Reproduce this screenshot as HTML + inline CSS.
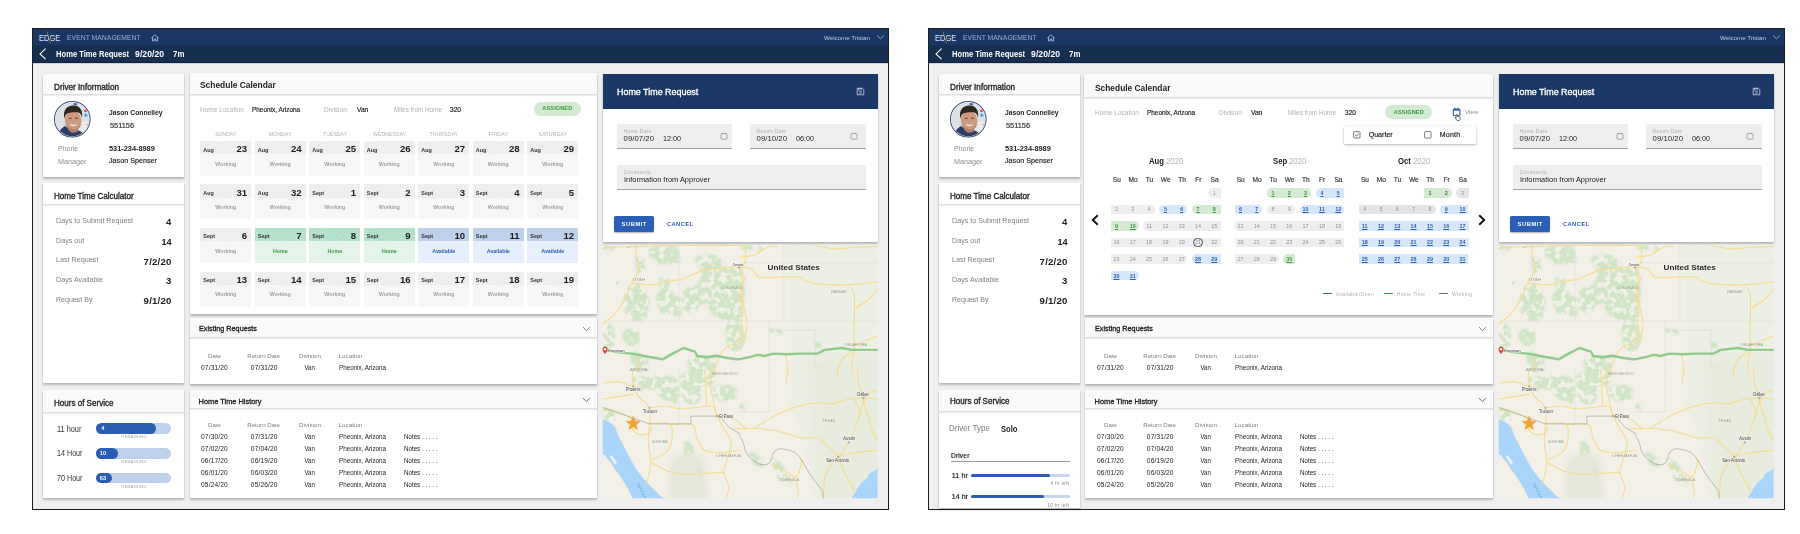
<!DOCTYPE html>
<html lang="en"><head><meta charset="utf-8"><title>Home Time Request</title>
<style>
html,body{margin:0;padding:0;background:#fff;}
body{width:1800px;height:534px;position:relative;overflow:hidden;font-family:"Liberation Sans",sans-serif;}
.scr{position:absolute;top:0;width:900px;height:534px;will-change:transform;}
.t{position:absolute;white-space:nowrap;}
.card{box-shadow:0 1.5px 2px rgba(0,0,0,.24),0 0 1px rgba(0,0,0,.10);}
svg{position:absolute;overflow:visible;}
</style></head><body>
<div class="scr" style="left:0px"><div style="position:absolute;left:32px;top:28px;width:857px;height:482px;box-sizing:border-box;background:#efefef;"></div><div style="position:absolute;left:33.00px;top:29.00px;width:855.00px;height:16.40px;background:#183764;"></div><div style="position:absolute;left:33.00px;top:45.40px;width:855.00px;height:17.60px;background:#162e4f;box-shadow:0 0.5px 1.5px rgba(0,0,0,.3);border-bottom:1px solid #0d2247;box-sizing:border-box;"></div><div class="t" style="left:39.00px;top:32.75px;height:11.96px;line-height:11.96px;font-size:9.2px;color:#e4e9f2;transform:scaleX(0.8131);transform-origin:0 50%;">EDGE</div><svg style="left:44px;top:30px" width="10" height="15"><line x1="3.2" y1="1.6" x2="6.6" y2="13.4" stroke="#c9a548" stroke-width="0.8"/><line x1="3.9" y1="1.6" x2="7.3" y2="13.4" stroke="#183764" stroke-width="0.8"/></svg><div class="t" style="left:67.00px;top:33.41px;height:9.49px;line-height:9.49px;font-size:7.3px;color:#9cb0cd;transform:scaleX(0.9382);transform-origin:0 50%;">EVENT MANAGEMENT</div><svg style="left:150.5px;top:33.5px" width="8" height="8" viewBox="0 0 8 8"><path d="M0.6 3.9 L4 0.9 L7.4 3.9 M1.5 3.3 V7 H3.2 V5 H4.8 V7 H6.5 V3.3" fill="none" stroke="#b9c7dc" stroke-width="0.8" stroke-linejoin="round" stroke-linecap="round"/></svg><div class="t" style="left:824.00px;top:33.63px;height:8.06px;line-height:8.06px;font-size:6.2px;color:#c3cfe0;transform:scaleX(0.9988);transform-origin:0 50%;">Welcome Tristan</div><svg style="left:876px;top:34px" width="9" height="6" viewBox="0 0 9 6"><path d="M1 1.3 L4.5 4.7 L8 1.3" fill="none" stroke="#c3cfe0" stroke-width="0.7"/></svg><svg style="left:38px;top:47px" width="10" height="14" viewBox="0 0 10 14"><path d="M7.6 1.7 L2 6.9 L7.6 12.1" fill="none" stroke="#fff" stroke-width="1.1"/></svg><div class="t" style="left:56.00px;top:49.28px;height:11.18px;line-height:11.18px;font-size:8.6px;color:#fff;font-weight:700;transform:scaleX(0.8846);transform-origin:0 50%;">Home Time Request</div><div class="t" style="left:135.10px;top:49.28px;height:11.18px;line-height:11.18px;font-size:8.6px;color:#fff;font-weight:700;letter-spacing:0.044px;">9/20/20</div><div class="t" style="left:172.60px;top:49.28px;height:11.18px;line-height:11.18px;font-size:8.6px;color:#fff;font-weight:700;transform:scaleX(0.9172);transform-origin:0 50%;">7m</div><div class="card" style="position:absolute;left:43.00px;top:74.00px;width:141.00px;height:103.00px;background:#fff;"></div><div style="position:absolute;left:43.00px;top:74.00px;width:141.00px;height:21.00px;background:#fafafa;border-bottom:1px solid #dedede;box-sizing:border-box;box-shadow:0 1px 1px rgba(0,0,0,.07);"></div><div class="t" style="left:53.60px;top:82.20px;height:10.92px;line-height:10.92px;font-size:8.4px;color:#222;transform:scaleX(0.9767);transform-origin:0 50%;-webkit-text-stroke:0.32px currentColor;">Driver Information</div><svg style="left:54.45px;top:100.85px" width="36.6" height="36.6" viewBox="0 0 36 36">
<defs><clipPath id="avc"><circle cx="18" cy="18" r="16.6"/></clipPath><filter id="avb" x="-10%" y="-10%" width="120%" height="120%"><feGaussianBlur stdDeviation="0.45"/></filter></defs>
<circle cx="18" cy="18" r="17.5" fill="#fff" stroke="#3a4e78" stroke-width="1"/>
<g clip-path="url(#avc)"><g filter="url(#avb)">
<rect x="0" y="0" width="36" height="36" fill="#dde1e5"/>
<rect x="24" y="20" width="12" height="16" fill="#e9eaec"/>
<rect x="19.2" y="1.8" width="3.6" height="2.4" fill="#4a6fb5"/>
<circle cx="31.1" cy="9.6" r="1.5" fill="#e0525c"/><circle cx="31.3" cy="13.9" r="1.6" fill="#4ea3e6"/>
<circle cx="33.2" cy="23.5" r="1.3" fill="#eab9a8"/>
<path d="M3 36 C4 30 6.5 27.5 10.5 24.5 L15 27 L23 28.5 C27 30 30.5 32.5 32 36 Z" fill="#2a3e6a"/>
<path d="M13.6 24.5 L23.6 25.5 L23 30.4 L17.5 31.2 L13.8 28 Z" fill="#b98268"/>
<ellipse cx="18.9" cy="19.6" rx="8.3" ry="9.6" fill="#cf9a80" transform="rotate(-6 18.9 19.6)"/>
<path d="M10.2 17.5 C8.6 9 12.5 4.6 18.6 4.4 C25 4.2 28.6 8.6 27.6 16.4 C26.8 13 25.6 11.4 23.6 11.2 C20 10.9 15.5 11.2 13 12.4 C11.4 13.4 10.8 15.2 10.2 17.5 Z" fill="#2e2623"/>
<path d="M14.6 17.2 L17.4 17 M20.6 16.8 L23.6 17" stroke="#4a342c" stroke-width="0.9"/>
<path d="M15.2 22.9 C17.4 25.4 21 25.4 23 22.7 C20.6 23.5 17.6 23.6 15.2 22.9 Z" fill="#f4ecea"/>
<path d="M12 23 C13.5 27.5 17 29.6 20 29.4 C23.4 29 25.6 26.4 26.6 22.5 C25 26 22.6 27.6 19.6 27.8 C16.6 27.9 13.8 26.2 12 23 Z" fill="#a67560" opacity="0.7"/>
</g></g></svg><div class="t" style="left:108.70px;top:108.23px;height:10.14px;line-height:10.14px;font-size:7.8px;color:#222;font-weight:700;transform:scaleX(0.8631);transform-origin:0 50%;">Jason Connelley</div><div class="t" style="left:109.50px;top:121.33px;height:10.14px;line-height:10.14px;font-size:7.8px;color:#333;transform:scaleX(0.9431);transform-origin:0 50%;-webkit-text-stroke:0.18px currentColor;">551156</div><div class="t" style="left:57.50px;top:144.23px;height:10.14px;line-height:10.14px;font-size:7.8px;color:#8a8a8a;transform:scaleX(0.8956);transform-origin:0 50%;">Phone</div><div class="t" style="left:108.70px;top:144.03px;height:10.14px;line-height:10.14px;font-size:7.8px;color:#222;font-weight:700;transform:scaleX(0.9429);transform-origin:0 50%;">531-234-8989</div><div class="t" style="left:57.50px;top:156.63px;height:10.14px;line-height:10.14px;font-size:7.8px;color:#8a8a8a;transform:scaleX(0.9193);transform-origin:0 50%;">Manager</div><div class="t" style="left:108.70px;top:156.43px;height:10.14px;line-height:10.14px;font-size:7.8px;color:#222;transform:scaleX(0.9225);transform-origin:0 50%;-webkit-text-stroke:0.18px currentColor;">Jason Spenser</div><div class="card" style="position:absolute;left:43.00px;top:183.00px;width:141.00px;height:199.60px;background:#fff;"></div><div style="position:absolute;left:43.00px;top:183.00px;width:141.00px;height:21.60px;background:#fff;border-bottom:1px solid #dedede;box-sizing:border-box;box-shadow:0 1px 1px rgba(0,0,0,.07);"></div><div class="t" style="left:54.00px;top:191.30px;height:10.92px;line-height:10.92px;font-size:8.4px;color:#222;transform:scaleX(0.9628);transform-origin:0 50%;-webkit-text-stroke:0.32px currentColor;">Home Time Calculator</div><div class="t" style="left:55.50px;top:216.14px;height:9.88px;line-height:9.88px;font-size:7.6px;color:#808080;transform:scaleX(0.9396);transform-origin:0 50%;">Days to Submit Request</div><div class="t" style="left:166.06px;top:216.22px;height:12.48px;line-height:12.48px;font-size:9.6px;color:#222;font-weight:700;">4</div><div class="t" style="left:55.50px;top:235.74px;height:9.88px;line-height:9.88px;font-size:7.6px;color:#808080;transform:scaleX(0.9436);transform-origin:0 50%;">Days out</div><div class="t" style="left:160.72px;top:235.82px;height:12.48px;line-height:12.48px;font-size:9.6px;color:#222;font-weight:700;transform:scaleX(0.9552);transform-origin:10.68px 50%;">14</div><div class="t" style="left:55.50px;top:255.44px;height:9.88px;line-height:9.88px;font-size:7.6px;color:#808080;transform:scaleX(0.9490);transform-origin:0 50%;">Last Request</div><div class="t" style="left:143.62px;top:255.52px;height:12.48px;line-height:12.48px;font-size:9.6px;color:#222;font-weight:700;letter-spacing:0.218px;">7/2/20</div><div class="t" style="left:55.50px;top:275.04px;height:9.88px;line-height:9.88px;font-size:7.6px;color:#808080;transform:scaleX(0.9454);transform-origin:0 50%;">Days Available</div><div class="t" style="left:166.06px;top:275.12px;height:12.48px;line-height:12.48px;font-size:9.6px;color:#222;font-weight:700;">3</div><div class="t" style="left:55.50px;top:294.74px;height:9.88px;line-height:9.88px;font-size:7.6px;color:#808080;transform:scaleX(0.9290);transform-origin:0 50%;">Request By</div><div class="t" style="left:143.62px;top:294.82px;height:12.48px;line-height:12.48px;font-size:9.6px;color:#222;font-weight:700;letter-spacing:0.218px;">9/1/20</div><div class="card" style="position:absolute;left:43.00px;top:390.00px;width:141.00px;height:107.70px;background:#fff;"></div><div style="position:absolute;left:43.00px;top:390.00px;width:141.00px;height:22.70px;background:#fafafa;border-bottom:1px solid #dedede;box-sizing:border-box;box-shadow:0 1px 1px rgba(0,0,0,.07);"></div><div class="t" style="left:54.00px;top:398.30px;height:10.92px;line-height:10.92px;font-size:8.4px;color:#222;transform:scaleX(0.9599);transform-origin:0 50%;-webkit-text-stroke:0.32px currentColor;">Hours of Service</div><div class="t" style="left:57.30px;top:423.55px;height:10.79px;line-height:10.79px;font-size:8.3px;color:#333;transform:scaleX(0.8862);transform-origin:0 50%;">11 hour</div><div style="position:absolute;left:95.90px;top:423.20px;width:75.20px;height:10.80px;background:#bfd0ea;border-radius:5.4px;"></div><div style="position:absolute;left:95.90px;top:423.20px;width:60.60px;height:10.80px;background:#2b5eb3;border-radius:5.4px;"></div><div class="t" style="left:101.20px;top:425.46px;height:7.28px;line-height:7.28px;font-size:5.6px;color:#fff;font-weight:700;">4</div><div class="t" style="left:121.60px;top:434.98px;height:4.68px;line-height:4.68px;font-size:3.6px;color:#9a9a9a;letter-spacing:0.511px;">REMAINING</div><div class="t" style="left:57.30px;top:448.45px;height:10.79px;line-height:10.79px;font-size:8.3px;color:#333;transform:scaleX(0.8636);transform-origin:0 50%;">14 Hour</div><div style="position:absolute;left:95.90px;top:448.10px;width:75.20px;height:10.80px;background:#bfd0ea;border-radius:5.4px;"></div><div style="position:absolute;left:95.90px;top:448.10px;width:22.50px;height:10.80px;background:#2b5eb3;border-radius:5.4px;"></div><div class="t" style="left:99.80px;top:450.36px;height:7.28px;line-height:7.28px;font-size:5.6px;color:#fff;font-weight:700;">10</div><div class="t" style="left:121.60px;top:460.38px;height:4.68px;line-height:4.68px;font-size:3.6px;color:#9a9a9a;letter-spacing:0.511px;">REMAINING</div><div class="t" style="left:57.30px;top:472.95px;height:10.79px;line-height:10.79px;font-size:8.3px;color:#333;transform:scaleX(0.8636);transform-origin:0 50%;">70 Hour</div><div style="position:absolute;left:95.90px;top:472.60px;width:75.20px;height:10.80px;background:#bfd0ea;border-radius:5.4px;"></div><div style="position:absolute;left:95.90px;top:472.60px;width:15.70px;height:10.80px;background:#2b5eb3;border-radius:5.4px;"></div><div class="t" style="left:99.80px;top:474.86px;height:7.28px;line-height:7.28px;font-size:5.6px;color:#fff;font-weight:700;">63</div><div class="t" style="left:121.60px;top:484.78px;height:4.68px;line-height:4.68px;font-size:3.6px;color:#9a9a9a;letter-spacing:0.511px;">REMAINING</div><div class="card" style="position:absolute;left:190.00px;top:73.00px;width:407.40px;height:241.00px;background:#fff;"></div><div style="position:absolute;left:190.00px;top:73.00px;width:407.40px;height:22.00px;background:#fafafa;border-bottom:1px solid #dedede;box-sizing:border-box;box-shadow:0 1px 1px rgba(0,0,0,.07);"></div><div class="t" style="left:200.00px;top:79.44px;height:12.22px;line-height:12.22px;font-size:9.4px;color:#1d1d1d;font-weight:700;transform:scaleX(0.8980);transform-origin:0 50%;">Schedule Calendar</div><div class="t" style="left:200.00px;top:105.74px;height:8.97px;line-height:8.97px;font-size:6.9px;color:#b0b0b0;transform:scaleX(0.9481);transform-origin:0 50%;">Home Location</div><div class="t" style="left:252.40px;top:105.74px;height:8.97px;line-height:8.97px;font-size:6.9px;color:#222;transform:scaleX(0.9308);transform-origin:0 50%;-webkit-text-stroke:0.18px currentColor;">Pheonix, Arizona</div><div class="t" style="left:324.00px;top:105.74px;height:8.97px;line-height:8.97px;font-size:6.9px;color:#b0b0b0;transform:scaleX(0.9438);transform-origin:0 50%;">Division</div><div class="t" style="left:356.70px;top:105.74px;height:8.97px;line-height:8.97px;font-size:6.9px;color:#222;transform:scaleX(0.9605);transform-origin:0 50%;-webkit-text-stroke:0.18px currentColor;">Van</div><div class="t" style="left:393.50px;top:105.74px;height:8.97px;line-height:8.97px;font-size:6.9px;color:#b0b0b0;transform:scaleX(0.9206);transform-origin:0 50%;">Miles from Home</div><div class="t" style="left:450.30px;top:105.74px;height:8.97px;line-height:8.97px;font-size:6.9px;color:#222;transform:scaleX(0.9555);transform-origin:0 50%;-webkit-text-stroke:0.18px currentColor;">320</div><div style="position:absolute;left:533.50px;top:102.00px;width:47.50px;height:14.10px;background:#d2e9d2;border-radius:7.1px;"></div><div class="t" style="left:542.35px;top:104.66px;height:7.28px;line-height:7.28px;font-size:5.6px;color:#3b9b3b;font-weight:700;letter-spacing:0.094px;">ASSIGNED</div><div class="t" style="left:215.15px;top:131.09px;height:6.76px;line-height:6.76px;font-size:5.2px;color:#b0b0b0;letter-spacing:0.002px;">SUNDAY</div><div class="t" style="left:268.93px;top:131.09px;height:6.76px;line-height:6.76px;font-size:5.2px;color:#b0b0b0;letter-spacing:0.060px;">MONDAY</div><div class="t" style="left:322.71px;top:131.09px;height:6.76px;line-height:6.76px;font-size:5.2px;color:#b0b0b0;transform:scaleX(0.9969);transform-origin:12.09px 50%;">TUESDAY</div><div class="t" style="left:372.74px;top:131.09px;height:6.76px;line-height:6.76px;font-size:5.2px;color:#b0b0b0;transform:scaleX(0.9961);transform-origin:16.56px 50%;">WEDNESDAY</div><div class="t" style="left:429.57px;top:131.09px;height:6.76px;line-height:6.76px;font-size:5.2px;color:#b0b0b0;letter-spacing:0.035px;">THURSDAY</div><div class="t" style="left:488.62px;top:131.09px;height:6.76px;line-height:6.76px;font-size:5.2px;color:#b0b0b0;letter-spacing:0.136px;">FRIDAY</div><div class="t" style="left:538.61px;top:131.09px;height:6.76px;line-height:6.76px;font-size:5.2px;color:#b0b0b0;letter-spacing:0.120px;">SATURDAY</div><div style="position:absolute;left:200.20px;top:141.00px;width:51.10px;height:35.10px;background:#f7f7f7;"></div><div style="position:absolute;left:200.20px;top:141.00px;width:51.10px;height:13.20px;background:#ebebeb;background-image:repeating-linear-gradient(70deg,rgba(255,255,255,.34) 0,rgba(255,255,255,0) 1.1px,rgba(255,255,255,.34) 2.2px);"></div><div class="t" style="left:203.30px;top:146.58px;height:7.02px;line-height:7.02px;font-size:5.4px;color:#333;font-weight:700;">Aug</div><div class="t" style="left:236.42px;top:143.22px;height:12.48px;line-height:12.48px;font-size:9.6px;color:#1d1d1d;font-weight:700;">23</div><div class="t" style="left:215.25px;top:160.83px;height:6.89px;line-height:6.89px;font-size:5.3px;color:#9e9e9e;font-weight:700;">Working</div><div style="position:absolute;left:254.70px;top:141.00px;width:51.10px;height:35.10px;background:#f7f7f7;"></div><div style="position:absolute;left:254.70px;top:141.00px;width:51.10px;height:13.20px;background:#ebebeb;background-image:repeating-linear-gradient(70deg,rgba(255,255,255,.34) 0,rgba(255,255,255,0) 1.1px,rgba(255,255,255,.34) 2.2px);"></div><div class="t" style="left:257.80px;top:146.58px;height:7.02px;line-height:7.02px;font-size:5.4px;color:#333;font-weight:700;">Aug</div><div class="t" style="left:290.92px;top:143.22px;height:12.48px;line-height:12.48px;font-size:9.6px;color:#1d1d1d;font-weight:700;">24</div><div class="t" style="left:269.75px;top:160.83px;height:6.89px;line-height:6.89px;font-size:5.3px;color:#9e9e9e;font-weight:700;">Working</div><div style="position:absolute;left:309.20px;top:141.00px;width:51.10px;height:35.10px;background:#f7f7f7;"></div><div style="position:absolute;left:309.20px;top:141.00px;width:51.10px;height:13.20px;background:#ebebeb;background-image:repeating-linear-gradient(70deg,rgba(255,255,255,.34) 0,rgba(255,255,255,0) 1.1px,rgba(255,255,255,.34) 2.2px);"></div><div class="t" style="left:312.30px;top:146.58px;height:7.02px;line-height:7.02px;font-size:5.4px;color:#333;font-weight:700;">Aug</div><div class="t" style="left:345.42px;top:143.22px;height:12.48px;line-height:12.48px;font-size:9.6px;color:#1d1d1d;font-weight:700;">25</div><div class="t" style="left:324.25px;top:160.83px;height:6.89px;line-height:6.89px;font-size:5.3px;color:#9e9e9e;font-weight:700;">Working</div><div style="position:absolute;left:363.70px;top:141.00px;width:51.10px;height:35.10px;background:#f7f7f7;"></div><div style="position:absolute;left:363.70px;top:141.00px;width:51.10px;height:13.20px;background:#ebebeb;background-image:repeating-linear-gradient(70deg,rgba(255,255,255,.34) 0,rgba(255,255,255,0) 1.1px,rgba(255,255,255,.34) 2.2px);"></div><div class="t" style="left:366.80px;top:146.58px;height:7.02px;line-height:7.02px;font-size:5.4px;color:#333;font-weight:700;">Aug</div><div class="t" style="left:399.92px;top:143.22px;height:12.48px;line-height:12.48px;font-size:9.6px;color:#1d1d1d;font-weight:700;">26</div><div class="t" style="left:378.75px;top:160.83px;height:6.89px;line-height:6.89px;font-size:5.3px;color:#9e9e9e;font-weight:700;">Working</div><div style="position:absolute;left:418.20px;top:141.00px;width:51.10px;height:35.10px;background:#f7f7f7;"></div><div style="position:absolute;left:418.20px;top:141.00px;width:51.10px;height:13.20px;background:#ebebeb;background-image:repeating-linear-gradient(70deg,rgba(255,255,255,.34) 0,rgba(255,255,255,0) 1.1px,rgba(255,255,255,.34) 2.2px);"></div><div class="t" style="left:421.30px;top:146.58px;height:7.02px;line-height:7.02px;font-size:5.4px;color:#333;font-weight:700;">Aug</div><div class="t" style="left:454.42px;top:143.22px;height:12.48px;line-height:12.48px;font-size:9.6px;color:#1d1d1d;font-weight:700;">27</div><div class="t" style="left:433.25px;top:160.83px;height:6.89px;line-height:6.89px;font-size:5.3px;color:#9e9e9e;font-weight:700;">Working</div><div style="position:absolute;left:472.70px;top:141.00px;width:51.10px;height:35.10px;background:#f7f7f7;"></div><div style="position:absolute;left:472.70px;top:141.00px;width:51.10px;height:13.20px;background:#ebebeb;background-image:repeating-linear-gradient(70deg,rgba(255,255,255,.34) 0,rgba(255,255,255,0) 1.1px,rgba(255,255,255,.34) 2.2px);"></div><div class="t" style="left:475.80px;top:146.58px;height:7.02px;line-height:7.02px;font-size:5.4px;color:#333;font-weight:700;">Aug</div><div class="t" style="left:508.92px;top:143.22px;height:12.48px;line-height:12.48px;font-size:9.6px;color:#1d1d1d;font-weight:700;">28</div><div class="t" style="left:487.75px;top:160.83px;height:6.89px;line-height:6.89px;font-size:5.3px;color:#9e9e9e;font-weight:700;">Working</div><div style="position:absolute;left:527.20px;top:141.00px;width:51.10px;height:35.10px;background:#f7f7f7;"></div><div style="position:absolute;left:527.20px;top:141.00px;width:51.10px;height:13.20px;background:#ebebeb;background-image:repeating-linear-gradient(70deg,rgba(255,255,255,.34) 0,rgba(255,255,255,0) 1.1px,rgba(255,255,255,.34) 2.2px);"></div><div class="t" style="left:530.30px;top:146.58px;height:7.02px;line-height:7.02px;font-size:5.4px;color:#333;font-weight:700;">Aug</div><div class="t" style="left:563.42px;top:143.22px;height:12.48px;line-height:12.48px;font-size:9.6px;color:#1d1d1d;font-weight:700;">29</div><div class="t" style="left:542.25px;top:160.83px;height:6.89px;line-height:6.89px;font-size:5.3px;color:#9e9e9e;font-weight:700;">Working</div><div style="position:absolute;left:200.20px;top:184.40px;width:51.10px;height:35.10px;background:#f7f7f7;"></div><div style="position:absolute;left:200.20px;top:184.40px;width:51.10px;height:13.20px;background:#ebebeb;background-image:repeating-linear-gradient(70deg,rgba(255,255,255,.34) 0,rgba(255,255,255,0) 1.1px,rgba(255,255,255,.34) 2.2px);"></div><div class="t" style="left:203.30px;top:189.98px;height:7.02px;line-height:7.02px;font-size:5.4px;color:#333;font-weight:700;">Aug</div><div class="t" style="left:236.42px;top:186.62px;height:12.48px;line-height:12.48px;font-size:9.6px;color:#1d1d1d;font-weight:700;">31</div><div class="t" style="left:215.25px;top:204.23px;height:6.89px;line-height:6.89px;font-size:5.3px;color:#9e9e9e;font-weight:700;">Working</div><div style="position:absolute;left:254.70px;top:184.40px;width:51.10px;height:35.10px;background:#f7f7f7;"></div><div style="position:absolute;left:254.70px;top:184.40px;width:51.10px;height:13.20px;background:#ebebeb;background-image:repeating-linear-gradient(70deg,rgba(255,255,255,.34) 0,rgba(255,255,255,0) 1.1px,rgba(255,255,255,.34) 2.2px);"></div><div class="t" style="left:257.80px;top:189.98px;height:7.02px;line-height:7.02px;font-size:5.4px;color:#333;font-weight:700;">Aug</div><div class="t" style="left:290.92px;top:186.62px;height:12.48px;line-height:12.48px;font-size:9.6px;color:#1d1d1d;font-weight:700;">32</div><div class="t" style="left:269.75px;top:204.23px;height:6.89px;line-height:6.89px;font-size:5.3px;color:#9e9e9e;font-weight:700;">Working</div><div style="position:absolute;left:309.20px;top:184.40px;width:51.10px;height:35.10px;background:#f7f7f7;"></div><div style="position:absolute;left:309.20px;top:184.40px;width:51.10px;height:13.20px;background:#ebebeb;background-image:repeating-linear-gradient(70deg,rgba(255,255,255,.34) 0,rgba(255,255,255,0) 1.1px,rgba(255,255,255,.34) 2.2px);"></div><div class="t" style="left:312.30px;top:189.98px;height:7.02px;line-height:7.02px;font-size:5.4px;color:#333;font-weight:700;">Sept</div><div class="t" style="left:350.76px;top:186.62px;height:12.48px;line-height:12.48px;font-size:9.6px;color:#1d1d1d;font-weight:700;">1</div><div class="t" style="left:324.25px;top:204.23px;height:6.89px;line-height:6.89px;font-size:5.3px;color:#9e9e9e;font-weight:700;">Working</div><div style="position:absolute;left:363.70px;top:184.40px;width:51.10px;height:35.10px;background:#f7f7f7;"></div><div style="position:absolute;left:363.70px;top:184.40px;width:51.10px;height:13.20px;background:#ebebeb;background-image:repeating-linear-gradient(70deg,rgba(255,255,255,.34) 0,rgba(255,255,255,0) 1.1px,rgba(255,255,255,.34) 2.2px);"></div><div class="t" style="left:366.80px;top:189.98px;height:7.02px;line-height:7.02px;font-size:5.4px;color:#333;font-weight:700;">Sept</div><div class="t" style="left:405.26px;top:186.62px;height:12.48px;line-height:12.48px;font-size:9.6px;color:#1d1d1d;font-weight:700;">2</div><div class="t" style="left:378.75px;top:204.23px;height:6.89px;line-height:6.89px;font-size:5.3px;color:#9e9e9e;font-weight:700;">Working</div><div style="position:absolute;left:418.20px;top:184.40px;width:51.10px;height:35.10px;background:#f7f7f7;"></div><div style="position:absolute;left:418.20px;top:184.40px;width:51.10px;height:13.20px;background:#ebebeb;background-image:repeating-linear-gradient(70deg,rgba(255,255,255,.34) 0,rgba(255,255,255,0) 1.1px,rgba(255,255,255,.34) 2.2px);"></div><div class="t" style="left:421.30px;top:189.98px;height:7.02px;line-height:7.02px;font-size:5.4px;color:#333;font-weight:700;">Sept</div><div class="t" style="left:459.76px;top:186.62px;height:12.48px;line-height:12.48px;font-size:9.6px;color:#1d1d1d;font-weight:700;">3</div><div class="t" style="left:433.25px;top:204.23px;height:6.89px;line-height:6.89px;font-size:5.3px;color:#9e9e9e;font-weight:700;">Working</div><div style="position:absolute;left:472.70px;top:184.40px;width:51.10px;height:35.10px;background:#f7f7f7;"></div><div style="position:absolute;left:472.70px;top:184.40px;width:51.10px;height:13.20px;background:#ebebeb;background-image:repeating-linear-gradient(70deg,rgba(255,255,255,.34) 0,rgba(255,255,255,0) 1.1px,rgba(255,255,255,.34) 2.2px);"></div><div class="t" style="left:475.80px;top:189.98px;height:7.02px;line-height:7.02px;font-size:5.4px;color:#333;font-weight:700;">Sept</div><div class="t" style="left:514.26px;top:186.62px;height:12.48px;line-height:12.48px;font-size:9.6px;color:#1d1d1d;font-weight:700;">4</div><div class="t" style="left:487.75px;top:204.23px;height:6.89px;line-height:6.89px;font-size:5.3px;color:#9e9e9e;font-weight:700;">Working</div><div style="position:absolute;left:527.20px;top:184.40px;width:51.10px;height:35.10px;background:#f7f7f7;"></div><div style="position:absolute;left:527.20px;top:184.40px;width:51.10px;height:13.20px;background:#ebebeb;background-image:repeating-linear-gradient(70deg,rgba(255,255,255,.34) 0,rgba(255,255,255,0) 1.1px,rgba(255,255,255,.34) 2.2px);"></div><div class="t" style="left:530.30px;top:189.98px;height:7.02px;line-height:7.02px;font-size:5.4px;color:#333;font-weight:700;">Sept</div><div class="t" style="left:568.76px;top:186.62px;height:12.48px;line-height:12.48px;font-size:9.6px;color:#1d1d1d;font-weight:700;">5</div><div class="t" style="left:542.25px;top:204.23px;height:6.89px;line-height:6.89px;font-size:5.3px;color:#9e9e9e;font-weight:700;">Working</div><div style="position:absolute;left:200.20px;top:227.90px;width:51.10px;height:35.10px;background:#f7f7f7;"></div><div style="position:absolute;left:200.20px;top:227.90px;width:51.10px;height:13.20px;background:#ebebeb;background-image:repeating-linear-gradient(70deg,rgba(255,255,255,.34) 0,rgba(255,255,255,0) 1.1px,rgba(255,255,255,.34) 2.2px);"></div><div class="t" style="left:203.30px;top:233.48px;height:7.02px;line-height:7.02px;font-size:5.4px;color:#333;font-weight:700;">Sept</div><div class="t" style="left:241.76px;top:230.12px;height:12.48px;line-height:12.48px;font-size:9.6px;color:#1d1d1d;font-weight:700;">6</div><div class="t" style="left:215.25px;top:247.73px;height:6.89px;line-height:6.89px;font-size:5.3px;color:#9e9e9e;font-weight:700;">Working</div><div style="position:absolute;left:254.70px;top:227.90px;width:51.10px;height:35.10px;background:#e4f4eb;"></div><div style="position:absolute;left:254.70px;top:227.90px;width:51.10px;height:13.20px;background:#a6dbc1;background-image:repeating-linear-gradient(70deg,rgba(255,255,255,.34) 0,rgba(255,255,255,0) 1.1px,rgba(255,255,255,.34) 2.2px);"></div><div class="t" style="left:257.80px;top:233.48px;height:7.02px;line-height:7.02px;font-size:5.4px;color:#333;font-weight:700;">Sept</div><div class="t" style="left:296.26px;top:230.12px;height:12.48px;line-height:12.48px;font-size:9.6px;color:#1d1d1d;font-weight:700;">7</div><div class="t" style="left:272.94px;top:247.73px;height:6.89px;line-height:6.89px;font-size:5.3px;color:#349b38;font-weight:700;">Home</div><div style="position:absolute;left:309.20px;top:227.90px;width:51.10px;height:35.10px;background:#e4f4eb;"></div><div style="position:absolute;left:309.20px;top:227.90px;width:51.10px;height:13.20px;background:#a6dbc1;background-image:repeating-linear-gradient(70deg,rgba(255,255,255,.34) 0,rgba(255,255,255,0) 1.1px,rgba(255,255,255,.34) 2.2px);"></div><div class="t" style="left:312.30px;top:233.48px;height:7.02px;line-height:7.02px;font-size:5.4px;color:#333;font-weight:700;">Sept</div><div class="t" style="left:350.76px;top:230.12px;height:12.48px;line-height:12.48px;font-size:9.6px;color:#1d1d1d;font-weight:700;">8</div><div class="t" style="left:327.44px;top:247.73px;height:6.89px;line-height:6.89px;font-size:5.3px;color:#349b38;font-weight:700;">Home</div><div style="position:absolute;left:363.70px;top:227.90px;width:51.10px;height:35.10px;background:#e4f4eb;"></div><div style="position:absolute;left:363.70px;top:227.90px;width:51.10px;height:13.20px;background:#a6dbc1;background-image:repeating-linear-gradient(70deg,rgba(255,255,255,.34) 0,rgba(255,255,255,0) 1.1px,rgba(255,255,255,.34) 2.2px);"></div><div class="t" style="left:366.80px;top:233.48px;height:7.02px;line-height:7.02px;font-size:5.4px;color:#333;font-weight:700;">Sept</div><div class="t" style="left:405.26px;top:230.12px;height:12.48px;line-height:12.48px;font-size:9.6px;color:#1d1d1d;font-weight:700;">9</div><div class="t" style="left:381.94px;top:247.73px;height:6.89px;line-height:6.89px;font-size:5.3px;color:#349b38;font-weight:700;">Home</div><div style="position:absolute;left:418.20px;top:227.90px;width:51.10px;height:35.10px;background:#e6f0fd;"></div><div style="position:absolute;left:418.20px;top:227.90px;width:51.10px;height:13.20px;background:#bdd0ec;"></div><div class="t" style="left:421.30px;top:233.48px;height:7.02px;line-height:7.02px;font-size:5.4px;color:#333;font-weight:700;">Sept</div><div class="t" style="left:454.42px;top:230.12px;height:12.48px;line-height:12.48px;font-size:9.6px;color:#1d1d1d;font-weight:700;">10</div><div class="t" style="left:432.26px;top:247.73px;height:6.89px;line-height:6.89px;font-size:5.3px;color:#2b5eb3;font-weight:700;">Available</div><div style="position:absolute;left:472.70px;top:227.90px;width:51.10px;height:35.10px;background:#e6f0fd;"></div><div style="position:absolute;left:472.70px;top:227.90px;width:51.10px;height:13.20px;background:#bdd0ec;"></div><div class="t" style="left:475.80px;top:233.48px;height:7.02px;line-height:7.02px;font-size:5.4px;color:#333;font-weight:700;">Sept</div><div class="t" style="left:509.45px;top:230.12px;height:12.48px;line-height:12.48px;font-size:9.6px;color:#1d1d1d;font-weight:700;">11</div><div class="t" style="left:486.76px;top:247.73px;height:6.89px;line-height:6.89px;font-size:5.3px;color:#2b5eb3;font-weight:700;">Available</div><div style="position:absolute;left:527.20px;top:227.90px;width:51.10px;height:35.10px;background:#e6f0fd;"></div><div style="position:absolute;left:527.20px;top:227.90px;width:51.10px;height:13.20px;background:#bdd0ec;"></div><div class="t" style="left:530.30px;top:233.48px;height:7.02px;line-height:7.02px;font-size:5.4px;color:#333;font-weight:700;">Sept</div><div class="t" style="left:563.42px;top:230.12px;height:12.48px;line-height:12.48px;font-size:9.6px;color:#1d1d1d;font-weight:700;">12</div><div class="t" style="left:541.26px;top:247.73px;height:6.89px;line-height:6.89px;font-size:5.3px;color:#2b5eb3;font-weight:700;">Available</div><div style="position:absolute;left:200.20px;top:271.50px;width:51.10px;height:35.10px;background:#f7f7f7;"></div><div style="position:absolute;left:200.20px;top:271.50px;width:51.10px;height:13.20px;background:#ebebeb;background-image:repeating-linear-gradient(70deg,rgba(255,255,255,.34) 0,rgba(255,255,255,0) 1.1px,rgba(255,255,255,.34) 2.2px);"></div><div class="t" style="left:203.30px;top:277.08px;height:7.02px;line-height:7.02px;font-size:5.4px;color:#333;font-weight:700;">Sept</div><div class="t" style="left:236.42px;top:273.72px;height:12.48px;line-height:12.48px;font-size:9.6px;color:#1d1d1d;font-weight:700;">13</div><div class="t" style="left:215.25px;top:291.33px;height:6.89px;line-height:6.89px;font-size:5.3px;color:#9e9e9e;font-weight:700;">Working</div><div style="position:absolute;left:254.70px;top:271.50px;width:51.10px;height:35.10px;background:#f7f7f7;"></div><div style="position:absolute;left:254.70px;top:271.50px;width:51.10px;height:13.20px;background:#ebebeb;background-image:repeating-linear-gradient(70deg,rgba(255,255,255,.34) 0,rgba(255,255,255,0) 1.1px,rgba(255,255,255,.34) 2.2px);"></div><div class="t" style="left:257.80px;top:277.08px;height:7.02px;line-height:7.02px;font-size:5.4px;color:#333;font-weight:700;">Sept</div><div class="t" style="left:290.92px;top:273.72px;height:12.48px;line-height:12.48px;font-size:9.6px;color:#1d1d1d;font-weight:700;">14</div><div class="t" style="left:269.75px;top:291.33px;height:6.89px;line-height:6.89px;font-size:5.3px;color:#9e9e9e;font-weight:700;">Working</div><div style="position:absolute;left:309.20px;top:271.50px;width:51.10px;height:35.10px;background:#f7f7f7;"></div><div style="position:absolute;left:309.20px;top:271.50px;width:51.10px;height:13.20px;background:#ebebeb;background-image:repeating-linear-gradient(70deg,rgba(255,255,255,.34) 0,rgba(255,255,255,0) 1.1px,rgba(255,255,255,.34) 2.2px);"></div><div class="t" style="left:312.30px;top:277.08px;height:7.02px;line-height:7.02px;font-size:5.4px;color:#333;font-weight:700;">Sept</div><div class="t" style="left:345.42px;top:273.72px;height:12.48px;line-height:12.48px;font-size:9.6px;color:#1d1d1d;font-weight:700;">15</div><div class="t" style="left:324.25px;top:291.33px;height:6.89px;line-height:6.89px;font-size:5.3px;color:#9e9e9e;font-weight:700;">Working</div><div style="position:absolute;left:363.70px;top:271.50px;width:51.10px;height:35.10px;background:#f7f7f7;"></div><div style="position:absolute;left:363.70px;top:271.50px;width:51.10px;height:13.20px;background:#ebebeb;background-image:repeating-linear-gradient(70deg,rgba(255,255,255,.34) 0,rgba(255,255,255,0) 1.1px,rgba(255,255,255,.34) 2.2px);"></div><div class="t" style="left:366.80px;top:277.08px;height:7.02px;line-height:7.02px;font-size:5.4px;color:#333;font-weight:700;">Sept</div><div class="t" style="left:399.92px;top:273.72px;height:12.48px;line-height:12.48px;font-size:9.6px;color:#1d1d1d;font-weight:700;">16</div><div class="t" style="left:378.75px;top:291.33px;height:6.89px;line-height:6.89px;font-size:5.3px;color:#9e9e9e;font-weight:700;">Working</div><div style="position:absolute;left:418.20px;top:271.50px;width:51.10px;height:35.10px;background:#f7f7f7;"></div><div style="position:absolute;left:418.20px;top:271.50px;width:51.10px;height:13.20px;background:#ebebeb;background-image:repeating-linear-gradient(70deg,rgba(255,255,255,.34) 0,rgba(255,255,255,0) 1.1px,rgba(255,255,255,.34) 2.2px);"></div><div class="t" style="left:421.30px;top:277.08px;height:7.02px;line-height:7.02px;font-size:5.4px;color:#333;font-weight:700;">Sept</div><div class="t" style="left:454.42px;top:273.72px;height:12.48px;line-height:12.48px;font-size:9.6px;color:#1d1d1d;font-weight:700;">17</div><div class="t" style="left:433.25px;top:291.33px;height:6.89px;line-height:6.89px;font-size:5.3px;color:#9e9e9e;font-weight:700;">Working</div><div style="position:absolute;left:472.70px;top:271.50px;width:51.10px;height:35.10px;background:#f7f7f7;"></div><div style="position:absolute;left:472.70px;top:271.50px;width:51.10px;height:13.20px;background:#ebebeb;background-image:repeating-linear-gradient(70deg,rgba(255,255,255,.34) 0,rgba(255,255,255,0) 1.1px,rgba(255,255,255,.34) 2.2px);"></div><div class="t" style="left:475.80px;top:277.08px;height:7.02px;line-height:7.02px;font-size:5.4px;color:#333;font-weight:700;">Sept</div><div class="t" style="left:508.92px;top:273.72px;height:12.48px;line-height:12.48px;font-size:9.6px;color:#1d1d1d;font-weight:700;">18</div><div class="t" style="left:487.75px;top:291.33px;height:6.89px;line-height:6.89px;font-size:5.3px;color:#9e9e9e;font-weight:700;">Working</div><div style="position:absolute;left:527.20px;top:271.50px;width:51.10px;height:35.10px;background:#f7f7f7;"></div><div style="position:absolute;left:527.20px;top:271.50px;width:51.10px;height:13.20px;background:#ebebeb;background-image:repeating-linear-gradient(70deg,rgba(255,255,255,.34) 0,rgba(255,255,255,0) 1.1px,rgba(255,255,255,.34) 2.2px);"></div><div class="t" style="left:530.30px;top:277.08px;height:7.02px;line-height:7.02px;font-size:5.4px;color:#333;font-weight:700;">Sept</div><div class="t" style="left:563.42px;top:273.72px;height:12.48px;line-height:12.48px;font-size:9.6px;color:#1d1d1d;font-weight:700;">19</div><div class="t" style="left:542.25px;top:291.33px;height:6.89px;line-height:6.89px;font-size:5.3px;color:#9e9e9e;font-weight:700;">Working</div><div class="card" style="position:absolute;left:189.70px;top:318.00px;width:407.70px;height:66.30px;background:#fff;"></div><div style="position:absolute;left:189.70px;top:318.00px;width:407.70px;height:19.50px;background:#fafafa;border-bottom:1px solid #dedede;box-sizing:border-box;box-shadow:0 1px 1px rgba(0,0,0,.07);"></div><div class="t" style="left:198.70px;top:324.16px;height:9.62px;line-height:9.62px;font-size:7.4px;color:#222;transform:scaleX(0.9792);transform-origin:0 50%;-webkit-text-stroke:0.32px currentColor;">Existing Requests</div><svg style="left:581.90px;top:326.00px" width="9" height="6" viewBox="0 0 9 6"><path d="M1 1.2 L4.5 4.6 L8 1.2" fill="none" stroke="#707070" stroke-width="0.95"/></svg><div class="t" style="left:207.85px;top:352.33px;height:8.06px;line-height:8.06px;font-size:6.2px;color:#808080;transform:scaleX(0.9926);transform-origin:6.55px 50%;">Date</div><div class="t" style="left:247.49px;top:352.33px;height:8.06px;line-height:8.06px;font-size:6.2px;color:#808080;transform:scaleX(0.9872);transform-origin:16.71px 50%;">Return Date</div><div class="t" style="left:298.89px;top:352.33px;height:8.06px;line-height:8.06px;font-size:6.2px;color:#808080;letter-spacing:0.074px;">Division</div><div class="t" style="left:338.60px;top:352.33px;height:8.06px;line-height:8.06px;font-size:6.2px;color:#808080;letter-spacing:0.070px;">Location</div><div class="t" style="left:201.07px;top:364.10px;height:8.58px;line-height:8.58px;font-size:6.6px;color:#222;letter-spacing:0.139px;">07/31/20</div><div class="t" style="left:250.87px;top:364.10px;height:8.58px;line-height:8.58px;font-size:6.6px;color:#222;letter-spacing:0.139px;">07/31/20</div><div class="t" style="left:304.37px;top:364.10px;height:8.58px;line-height:8.58px;font-size:6.6px;color:#222;transform:scaleX(0.9153);transform-origin:5.63px 50%;">Van</div><div class="t" style="left:338.60px;top:364.10px;height:8.58px;line-height:8.58px;font-size:6.6px;color:#222;transform:scaleX(0.9489);transform-origin:0 50%;">Pheonix, Arizona</div><div class="card" style="position:absolute;left:189.70px;top:390.20px;width:407.70px;height:107.70px;background:#fff;"></div><div style="position:absolute;left:189.70px;top:390.20px;width:407.70px;height:18.90px;background:#fafafa;border-bottom:1px solid #dedede;box-sizing:border-box;box-shadow:0 1px 1px rgba(0,0,0,.07);"></div><div class="t" style="left:198.60px;top:397.26px;height:9.62px;line-height:9.62px;font-size:7.4px;color:#222;letter-spacing:0.005px;-webkit-text-stroke:0.32px currentColor;">Home Time History</div><svg style="left:581.90px;top:397.40px" width="9" height="6" viewBox="0 0 9 6"><path d="M1 1.2 L4.5 4.6 L8 1.2" fill="none" stroke="#707070" stroke-width="0.95"/></svg><div class="t" style="left:207.85px;top:420.83px;height:8.06px;line-height:8.06px;font-size:6.2px;color:#808080;transform:scaleX(0.9926);transform-origin:6.55px 50%;">Date</div><div class="t" style="left:247.49px;top:420.83px;height:8.06px;line-height:8.06px;font-size:6.2px;color:#808080;transform:scaleX(0.9872);transform-origin:16.71px 50%;">Return Date</div><div class="t" style="left:298.89px;top:420.83px;height:8.06px;line-height:8.06px;font-size:6.2px;color:#808080;letter-spacing:0.074px;">Division</div><div class="t" style="left:338.60px;top:420.83px;height:8.06px;line-height:8.06px;font-size:6.2px;color:#808080;letter-spacing:0.070px;">Location</div><div class="t" style="left:201.07px;top:432.80px;height:8.58px;line-height:8.58px;font-size:6.6px;color:#222;letter-spacing:0.139px;">07/30/20</div><div class="t" style="left:250.87px;top:432.80px;height:8.58px;line-height:8.58px;font-size:6.6px;color:#222;letter-spacing:0.139px;">07/31/20</div><div class="t" style="left:304.37px;top:432.80px;height:8.58px;line-height:8.58px;font-size:6.6px;color:#222;transform:scaleX(0.9153);transform-origin:5.63px 50%;">Van</div><div class="t" style="left:338.60px;top:432.80px;height:8.58px;line-height:8.58px;font-size:6.6px;color:#222;transform:scaleX(0.9489);transform-origin:0 50%;">Pheonix, Arizona</div><div class="t" style="left:404.00px;top:432.80px;height:8.58px;line-height:8.58px;font-size:6.6px;color:#222;transform:scaleX(0.9416);transform-origin:0 50%;">Notes . . . . .</div><div class="t" style="left:201.07px;top:444.90px;height:8.58px;line-height:8.58px;font-size:6.6px;color:#222;letter-spacing:0.139px;">07/02/20</div><div class="t" style="left:250.87px;top:444.90px;height:8.58px;line-height:8.58px;font-size:6.6px;color:#222;letter-spacing:0.139px;">07/04/20</div><div class="t" style="left:304.37px;top:444.90px;height:8.58px;line-height:8.58px;font-size:6.6px;color:#222;transform:scaleX(0.9153);transform-origin:5.63px 50%;">Van</div><div class="t" style="left:338.60px;top:444.90px;height:8.58px;line-height:8.58px;font-size:6.6px;color:#222;transform:scaleX(0.9489);transform-origin:0 50%;">Pheonix, Arizona</div><div class="t" style="left:404.00px;top:444.90px;height:8.58px;line-height:8.58px;font-size:6.6px;color:#222;transform:scaleX(0.9416);transform-origin:0 50%;">Notes . . . . .</div><div class="t" style="left:201.07px;top:457.00px;height:8.58px;line-height:8.58px;font-size:6.6px;color:#222;letter-spacing:0.139px;">06/17/20</div><div class="t" style="left:250.87px;top:457.00px;height:8.58px;line-height:8.58px;font-size:6.6px;color:#222;letter-spacing:0.139px;">06/19/20</div><div class="t" style="left:304.37px;top:457.00px;height:8.58px;line-height:8.58px;font-size:6.6px;color:#222;transform:scaleX(0.9153);transform-origin:5.63px 50%;">Van</div><div class="t" style="left:338.60px;top:457.00px;height:8.58px;line-height:8.58px;font-size:6.6px;color:#222;transform:scaleX(0.9489);transform-origin:0 50%;">Pheonix, Arizona</div><div class="t" style="left:404.00px;top:457.00px;height:8.58px;line-height:8.58px;font-size:6.6px;color:#222;transform:scaleX(0.9416);transform-origin:0 50%;">Notes . . . . .</div><div class="t" style="left:201.07px;top:469.10px;height:8.58px;line-height:8.58px;font-size:6.6px;color:#222;letter-spacing:0.139px;">06/01/20</div><div class="t" style="left:250.87px;top:469.10px;height:8.58px;line-height:8.58px;font-size:6.6px;color:#222;letter-spacing:0.139px;">06/03/20</div><div class="t" style="left:304.37px;top:469.10px;height:8.58px;line-height:8.58px;font-size:6.6px;color:#222;transform:scaleX(0.9153);transform-origin:5.63px 50%;">Van</div><div class="t" style="left:338.60px;top:469.10px;height:8.58px;line-height:8.58px;font-size:6.6px;color:#222;transform:scaleX(0.9489);transform-origin:0 50%;">Pheonix, Arizona</div><div class="t" style="left:404.00px;top:469.10px;height:8.58px;line-height:8.58px;font-size:6.6px;color:#222;transform:scaleX(0.9416);transform-origin:0 50%;">Notes . . . . .</div><div class="t" style="left:201.07px;top:481.20px;height:8.58px;line-height:8.58px;font-size:6.6px;color:#222;letter-spacing:0.139px;">05/24/20</div><div class="t" style="left:250.87px;top:481.20px;height:8.58px;line-height:8.58px;font-size:6.6px;color:#222;letter-spacing:0.139px;">05/26/20</div><div class="t" style="left:304.37px;top:481.20px;height:8.58px;line-height:8.58px;font-size:6.6px;color:#222;transform:scaleX(0.9153);transform-origin:5.63px 50%;">Van</div><div class="t" style="left:338.60px;top:481.20px;height:8.58px;line-height:8.58px;font-size:6.6px;color:#222;transform:scaleX(0.9489);transform-origin:0 50%;">Pheonix, Arizona</div><div class="t" style="left:404.00px;top:481.20px;height:8.58px;line-height:8.58px;font-size:6.6px;color:#222;transform:scaleX(0.9416);transform-origin:0 50%;">Notes . . . . .</div><div class="card" style="position:absolute;left:603.00px;top:73.70px;width:274.50px;height:168.00px;background:#fff;"></div><div style="position:absolute;left:603.00px;top:73.70px;width:274.50px;height:35.30px;background:#1a3864;"></div><div class="t" style="left:616.70px;top:86.55px;height:11.96px;line-height:11.96px;font-size:9.2px;color:#fff;transform:scaleX(0.9707);transform-origin:0 50%;-webkit-text-stroke:0.32px currentColor;">Home Time Request</div><svg style="left:856.4px;top:87.2px" width="9" height="9" viewBox="0 0 9 9"><path d="M1.2 1.2 H6.3 L7.8 2.7 V7.8 H1.2 Z" fill="none" stroke="#dfe6f0" stroke-width="0.7"/><rect x="2.7" y="1.4" width="3" height="1.6" fill="none" stroke="#dfe6f0" stroke-width="0.5"/><circle cx="4.5" cy="5.4" r="1.1" fill="none" stroke="#dfe6f0" stroke-width="0.6"/></svg><div style="position:absolute;left:616.70px;top:123.90px;width:115.30px;height:25.10px;background:#eeeeee;border-bottom:1px solid #a2a2a2;box-sizing:border-box;border-radius:1.5px 1.5px 0 0;"></div><div style="position:absolute;left:749.70px;top:123.90px;width:116.00px;height:25.10px;background:#eeeeee;border-bottom:1px solid #a2a2a2;box-sizing:border-box;border-radius:1.5px 1.5px 0 0;"></div><div style="position:absolute;left:616.70px;top:165.40px;width:249.00px;height:24.40px;background:#eeeeee;border-bottom:1px solid #a2a2a2;box-sizing:border-box;border-radius:1.5px 1.5px 0 0;"></div><div class="t" style="left:623.60px;top:127.90px;height:6.5px;line-height:6.5px;font-size:5px;color:#ababab;letter-spacing:0.301px;">Home Date</div><div class="t" style="left:623.60px;top:133.89px;height:10.01px;line-height:10.01px;font-size:7.7px;color:#222;letter-spacing:0.066px;">09/07/20</div><div class="t" style="left:663.40px;top:133.89px;height:10.01px;line-height:10.01px;font-size:7.7px;color:#222;transform:scaleX(0.9341);transform-origin:0 50%;">12:00</div><svg style="left:720.00px;top:132.40px" width="8" height="8" viewBox="0 0 8 8"><rect x="1" y="1.6" width="6" height="5.6" rx="0.8" fill="none" stroke="#8a8a8a" stroke-width="0.7"/><path d="M2.5 0.6 V2 M5.5 0.6 V2" stroke="#8a8a8a" stroke-width="0.7"/></svg><div class="t" style="left:756.60px;top:127.90px;height:6.5px;line-height:6.5px;font-size:5px;color:#ababab;letter-spacing:0.258px;">Return Date</div><div class="t" style="left:756.60px;top:133.89px;height:10.01px;line-height:10.01px;font-size:7.7px;color:#222;letter-spacing:0.066px;">09/10/20</div><div class="t" style="left:796.10px;top:133.89px;height:10.01px;line-height:10.01px;font-size:7.7px;color:#222;transform:scaleX(0.9341);transform-origin:0 50%;">06:00</div><svg style="left:850.30px;top:132.40px" width="8" height="8" viewBox="0 0 8 8"><rect x="1" y="1.6" width="6" height="5.6" rx="0.8" fill="none" stroke="#8a8a8a" stroke-width="0.7"/><path d="M2.5 0.6 V2 M5.5 0.6 V2" stroke="#8a8a8a" stroke-width="0.7"/></svg><div class="t" style="left:623.60px;top:169.00px;height:6.5px;line-height:6.5px;font-size:5px;color:#ababab;letter-spacing:0.403px;">Comments</div><div class="t" style="left:623.60px;top:175.04px;height:9.88px;line-height:9.88px;font-size:7.6px;color:#222;transform:scaleX(0.9811);transform-origin:0 50%;">Information from Approver</div><div style="position:absolute;left:613.90px;top:216.00px;width:40.10px;height:16.00px;background:#2c5fb4;border-radius:1.5px;box-shadow:0 1px 1.5px rgba(0,0,0,.3);"></div><div class="t" style="left:621.61px;top:220.75px;height:7.54px;line-height:7.54px;font-size:5.8px;color:#fff;font-weight:700;letter-spacing:0.511px;">SUBMIT</div><div class="t" style="left:666.90px;top:220.75px;height:7.54px;line-height:7.54px;font-size:5.8px;color:#2c5fb4;font-weight:700;letter-spacing:0.422px;">CANCEL</div><svg style="left:603.4px;top:245.2px" width="274.6" height="253.3" viewBox="0.4 0.2 274.6 253.3"><defs><clipPath id="mcA"><rect width="275" height="253.5"/></clipPath><filter id="blA" x="0" y="0" width="275" height="253.5" filterUnits="userSpaceOnUse"><feGaussianBlur in="SourceGraphic" stdDeviation="1.3" result="b"/><feTurbulence type="fractalNoise" baseFrequency="0.16" numOctaves="2" seed="7" result="n"/><feColorMatrix in="n" type="matrix" values="0 0 0 0 0  0 0 0 0 0  0 0 0 0 0  7 0 0 0 -2.6" result="m"/><feGaussianBlur in="m" stdDeviation="0.5" result="m2"/><feComposite in="b" in2="m2" operator="in"/></filter><filter id="bsA" x="-20%" y="-20%" width="140%" height="140%"><feGaussianBlur stdDeviation="4"/></filter></defs><g clip-path="url(#mcA)"><rect width="275" height="253.5" fill="#f3f0e8"/><g filter="url(#bsA)"><path d="M180 -10 L290 -10 L290 270 L215 270 L200 200 L185 150 L190 90 Z" fill="#ecefe3"/><path d="M205 110 L290 110 L290 270 L215 270 Z" fill="#e8ecde"/><path d="M70 215 L100 210 L105 262 L68 262 Z" fill="#e2e6d6"/></g><g filter="url(#blA)" fill="#c9e3bf" opacity="0.85"><path d="M92.0 12.6 C94.0 9.8 106.2 9.0 111.4 10.2 C116.7 11.4 119.4 17.9 123.6 19.9 C127.9 21.9 133.8 19.5 137.0 22.3 C140.3 25.2 142.5 31.3 143.1 37.0 C143.7 42.6 141.7 49.5 140.7 56.4 C139.6 63.3 139.8 75.1 137.0 78.4 C134.2 81.6 127.9 77.1 123.6 75.9 C119.4 74.7 115.1 73.9 111.4 71.0 C107.8 68.2 105.4 59.3 101.7 58.9 C98.0 58.5 93.2 68.2 89.5 68.6 C85.9 69.0 81.0 65.4 79.8 61.3 C78.6 57.2 79.8 47.9 82.2 44.3 C84.7 40.6 91.6 42.2 94.4 39.4 C97.2 36.6 99.7 31.7 99.3 27.2 C98.9 22.8 89.9 15.4 92.0 12.6 Z"/><path d="M123.6 78.4 C125.6 74.7 133.8 75.5 137.0 78.4 C140.3 81.2 143.7 90.5 143.1 95.4 C142.5 100.3 136.4 106.8 133.4 107.6 C130.3 108.4 126.5 105.1 124.8 100.3 C123.2 95.4 121.6 82.0 123.6 78.4 Z"/><path d="M33.5 12.6 C34.7 10.4 40.8 12.2 42.0 15.0 C43.3 17.9 42.0 27.4 40.8 29.7 C39.6 31.9 36.0 31.3 34.7 28.4 C33.5 25.6 32.3 14.8 33.5 12.6 Z"/><path d="M23.8 44.3 C26.6 40.2 34.5 37.8 38.4 39.4 C42.2 41.0 46.1 48.3 46.9 54.0 C47.7 59.7 45.9 69.8 43.3 73.5 C40.6 77.1 34.7 77.5 31.1 75.9 C27.4 74.3 22.6 69.0 21.3 63.7 C20.1 58.5 20.9 48.3 23.8 44.3 Z"/><path d="M54.2 47.9 C56.2 44.5 67.6 43.7 70.0 46.7 C72.5 49.7 70.9 62.7 68.8 66.2 C66.8 69.6 60.3 70.4 57.9 67.4 C55.4 64.4 52.2 51.4 54.2 47.9 Z"/><path d="M56.7 34.5 C58.1 32.7 65.0 32.5 66.4 34.5 C67.8 36.6 66.6 44.9 65.2 46.7 C63.8 48.5 59.3 47.5 57.9 45.5 C56.5 43.5 55.2 36.3 56.7 34.5 Z"/><path d="M70.0 54.0 C71.1 51.0 75.9 49.9 77.4 52.8 C78.8 55.6 79.6 68.0 78.6 71.0 C77.6 74.1 72.7 73.9 71.3 71.0 C69.8 68.2 69.0 57.0 70.0 54.0 Z"/><path d="M0.7 80.8 C2.1 77.3 8.6 78.8 10.4 82.0 C12.2 85.2 13.0 96.8 11.6 100.3 C10.2 103.7 3.7 105.9 1.9 102.7 C0.0 99.5 -0.8 84.2 0.7 80.8 Z"/><path d="M21.3 85.7 C23.6 83.6 33.7 84.4 36.0 86.9 C38.2 89.3 37.0 98.2 34.7 100.3 C32.5 102.3 24.8 101.5 22.6 99.0 C20.3 96.6 19.1 87.7 21.3 85.7 Z"/><path d="M28.7 107.6 C30.9 105.5 41.6 109.4 44.5 112.4 C47.3 115.5 47.9 123.8 45.7 125.8 C43.5 127.9 33.9 127.7 31.1 124.6 C28.2 121.6 26.4 109.6 28.7 107.6 Z"/><path d="M87.1 113.7 C90.9 111.2 107.6 110.2 111.4 112.4 C115.3 114.7 114.1 124.6 110.2 127.0 C106.4 129.5 92.2 129.3 88.3 127.0 C84.5 124.8 83.2 116.1 87.1 113.7 Z"/><path d="M0.7 0.9 C2.5 0.2 9.8 0.2 11.6 0.9 C13.4 1.7 13.4 4.6 11.6 5.3 C9.8 6.0 2.5 6.0 0.7 5.3 C-1.2 4.6 -1.2 1.7 0.7 0.9 Z"/><path d="M48.1 2.9 C52.4 0.8 70.2 -0.1 74.9 2.4 C79.6 4.8 78.6 14.6 76.1 17.5 C73.7 20.4 64.8 20.3 60.3 19.9 C55.8 19.5 51.4 17.9 49.3 15.0 C47.3 12.2 43.9 5.0 48.1 2.9 Z"/><path d="M31.1 132.3 C33.7 130.7 46.5 131.5 49.3 133.5 C52.2 135.6 50.8 142.9 48.1 144.5 C45.5 146.1 36.4 145.3 33.5 143.3 C30.7 141.2 28.5 133.9 31.1 132.3 Z"/><path d="M54.2 131.1 C58.5 130.3 71.5 130.3 74.9 134.7 C78.4 139.2 77.4 154.6 74.9 157.9 C72.5 161.1 64.6 157.3 60.3 154.2 C56.0 151.2 50.4 143.5 49.3 139.6 C48.3 135.8 50.0 131.9 54.2 131.1 Z"/><path d="M78.6 129.9 C81.0 125.8 92.6 126.6 95.6 131.1 C98.7 135.6 99.3 152.6 96.8 156.7 C94.4 160.7 84.0 159.9 81.0 155.4 C78.0 151.0 76.1 133.9 78.6 129.9 Z"/><path d="M95.6 125.0 C98.0 122.8 109.0 122.6 111.4 125.0 C113.9 127.4 112.7 137.4 110.2 139.6 C107.8 141.8 99.3 140.8 96.8 138.4 C94.4 136.0 93.2 127.2 95.6 125.0 Z"/><path d="M111.4 142.0 C114.5 139.8 128.9 138.6 132.1 140.8 C135.4 143.1 134.0 153.2 130.9 155.4 C127.9 157.7 117.1 156.5 113.9 154.2 C110.6 152.0 108.4 144.3 111.4 142.0 Z"/><path d="M0.7 164.0 C2.3 162.5 8.6 163.3 10.4 165.2 C12.2 167.0 13.2 173.5 11.6 174.9 C10.0 176.3 2.5 175.5 0.7 173.7 C-1.2 171.9 -1.0 165.4 0.7 164.0 Z"/><path d="M81.0 198.0 C82.2 196.0 87.9 196.0 89.5 198.0 C91.1 200.1 92.0 208.2 90.7 210.2 C89.5 212.2 83.8 212.2 82.2 210.2 C80.6 208.2 79.8 200.1 81.0 198.0 Z"/><path d="M83.4 222.4 C85.9 221.0 96.8 222.0 99.3 223.6 C101.7 225.2 100.5 230.7 98.0 232.1 C95.6 233.6 87.1 233.8 84.7 232.1 C82.2 230.5 81.0 223.8 83.4 222.4 Z"/><path d="M23.8 216.3 C24.8 215.3 29.1 216.1 29.9 217.5 C30.7 218.9 29.7 223.8 28.7 224.8 C27.6 225.8 24.6 225.0 23.8 223.6 C23.0 222.2 22.8 217.3 23.8 216.3 Z"/><path d="M139.4 0.9 C141.1 0.2 147.6 0.2 149.2 0.9 C150.8 1.7 150.8 4.6 149.2 5.3 C147.6 6.0 141.1 6.0 139.4 5.3 C137.8 4.6 137.8 1.7 139.4 0.9 Z"/><path d="M150.4 0.9 C151.8 0.2 157.5 0.2 158.9 0.9 C160.3 1.7 160.3 4.6 158.9 5.3 C157.5 6.0 151.8 6.0 150.4 5.3 C149.0 4.6 149.0 1.7 150.4 0.9 Z"/><path d="M134.6 27.2 C135.5 19.1 138.9 21.1 139.9 29.7 C140.9 38.2 141.5 70.2 140.7 78.4 C139.8 86.5 135.6 86.9 134.6 78.4 C133.6 69.8 133.7 35.3 134.6 27.2 Z"/><path d="M166.7 84.4 C168.9 83.6 177.5 83.6 179.6 84.4 C181.8 85.2 181.8 88.5 179.6 89.3 C177.5 90.1 168.9 90.1 166.7 89.3 C164.6 88.5 164.6 85.2 166.7 84.4 Z"/><path d="M212.5 97.8 C213.5 97.0 217.6 97.0 218.6 97.8 C219.6 98.6 219.6 101.9 218.6 102.7 C217.6 103.5 213.5 103.5 212.5 102.7 C211.5 101.9 211.5 98.6 212.5 97.8 Z"/><path d="M137.0 159.1 C137.8 158.1 141.1 159.1 141.9 160.3 C142.6 161.5 142.2 165.4 141.4 166.4 C140.6 167.4 137.7 167.6 137.0 166.4 C136.3 165.2 136.2 160.1 137.0 159.1 Z"/><path d="M146.7 207.8 C147.3 206.2 152.8 208.0 155.3 210.2 C157.7 212.5 162.0 219.6 161.3 221.2 C160.7 222.8 154.0 222.2 151.6 220.0 C149.2 217.7 146.1 209.4 146.7 207.8 Z"/><path d="M169.9 213.9 C170.5 211.6 173.9 212.5 177.2 216.3 C180.4 220.2 188.3 233.1 189.3 237.0 C190.4 240.9 185.9 240.7 183.3 239.4 C180.6 238.2 175.8 234.0 173.5 229.7 C171.3 225.4 169.3 216.1 169.9 213.9 Z"/></g><g filter="url(#bsA)"><path d="M70.0 217.5 C73.3 211.0 89.5 209.4 94.4 215.1 C99.3 220.8 102.5 245.1 99.3 251.6 C96.0 258.1 79.8 259.7 74.9 254.0 C70.0 248.4 66.8 224.0 70.0 217.5 Z" fill="#e5e8da"/></g><path d="M-3.1 174.5 C-2.6 168.9 -1.0 174.6 0.2 174.9 C1.5 175.1 2.9 175.3 4.4 176.0 C5.8 176.7 7.6 177.8 9.0 179.0 C10.4 180.2 11.8 181.3 12.8 183.1 C13.8 184.9 14.3 187.5 15.2 189.6 C16.2 191.8 17.1 193.6 18.4 196.2 C19.7 198.8 21.6 202.4 23.1 205.2 C24.6 208.0 25.6 210.2 27.2 213.1 C28.8 215.9 30.8 219.8 32.5 222.4 C34.1 225.1 35.6 226.9 37.1 229.0 C38.7 231.0 39.8 232.3 41.8 234.6 C43.8 236.9 46.8 240.0 49.3 242.6 C51.8 245.2 54.6 247.7 56.8 250.1 C59.0 252.5 66.6 255.9 62.4 257.1 C58.2 258.2 36.9 257.5 31.5 257.1 C26.1 256.6 31.0 256.0 30.2 254.3 C29.4 252.5 28.0 249.1 26.8 246.8 C25.6 244.4 24.5 242.5 23.1 240.2 C21.7 237.9 20.1 235.2 18.4 232.7 C16.7 230.2 14.5 227.7 12.8 225.2 C11.1 222.7 9.7 219.9 8.1 217.7 C6.5 215.5 4.7 213.5 3.4 212.1 C2.1 210.7 1.3 209.9 0.2 209.3 C-0.8 208.7 -2.6 214.2 -3.1 208.4 C-3.7 202.6 -3.7 180.1 -3.1 174.5 Z" fill="#a9d5fa"/><path d="M7.4 210.8 C7.4 210.1 8.9 210.6 10.0 211.7 C11.1 212.9 13.4 216.2 13.9 217.5 C14.4 218.9 13.7 220.0 13.0 219.8 C12.3 219.5 10.5 217.5 9.6 216.0 C8.7 214.6 7.3 211.5 7.4 210.8 Z" fill="#f3f0e8"/><path d="M278.2 223.6 C277.2 218.7 274.0 225.2 272.1 226.0 C270.3 226.9 268.7 227.2 267.3 228.5 C265.8 229.8 265.1 232.1 263.6 233.8 C262.1 235.6 260.0 236.9 258.3 239.0 C256.6 241.0 254.6 243.5 253.4 246.3 C252.2 249.0 246.8 253.8 251.0 255.3 C255.1 256.8 273.7 260.5 278.2 255.3 C282.8 250.0 279.2 228.5 278.2 223.6 Z" fill="#a9d5fa"/><ellipse cx="34.3" cy="14.6" rx="0.9" ry="2.6" fill="#a9d5fa"/><ellipse cx="14.8" cy="38.2" rx="1" ry="1.8" fill="#a9d5fa"/><ellipse cx="26.2" cy="2.4" rx="1.6" ry="1" fill="#a9d5fa"/><g fill="none" stroke="#dad6ce" stroke-width="0.45"><path d="M76.6 -2.0 L76.6 76.4"/><path d="M0.7 76.4 L143.1 76.4"/><path d="M137.0 76.4 L275.8 76.4"/><path d="M181.3 -2.0 L181.3 76.4"/><path d="M166.7 76.4 L166.7 129.5"/><path d="M166.7 85.2 L212.5 85.2 L212.5 122.2 L217.4 122.7 L222.2 124.6 L224.7 128.3"/><path d="M137.0 18.0 L275.8 18.0"/><path d="M76.6 125.0 L76.6 179.1"/><path d="M166.7 125.0 L166.7 166.9 L137.0 166.9"/><path d="M0.7 125.0 L0.7 125.0"/></g><g fill="none" stroke="#f8db8c" stroke-width="1.1" stroke-linecap="round"><path d="M0.7 3.4 C3.3 3.2 11.4 2.7 16.5 2.4 C21.6 2.1 28.2 1.2 31.1 1.7 C33.9 2.1 33.1 4.7 33.5 5.3"/><path d="M33.5 -2.0 C33.5 0.4 32.9 8.6 33.5 12.6 C34.1 16.7 37.2 19.3 37.2 22.3 C37.2 25.4 34.9 28.2 33.5 30.9 C32.1 33.5 30.3 34.9 28.7 38.2 C27.0 41.4 25.6 46.5 23.8 50.3 C22.0 54.2 19.7 58.1 17.7 61.3 C15.7 64.6 14.4 67.0 11.6 69.8 C8.8 72.7 2.5 76.9 0.7 78.4"/><path d="M28.7 38.2 C31.5 38.5 40.4 39.9 45.7 39.9 C51.0 39.9 56.2 38.9 60.3 38.2 C64.4 37.5 66.8 36.3 70.0 35.7 C73.3 35.1 76.5 35.5 79.8 34.5 C83.0 33.5 85.5 31.3 89.5 29.7 C93.6 28.0 99.3 25.8 104.1 24.8 C109.0 23.8 114.5 24.0 118.7 23.6 C123.0 23.2 126.5 22.6 129.7 22.3 C132.9 22.1 136.8 22.3 138.2 22.3"/><path d="M137.0 22.3 C137.4 24.8 139.4 31.7 139.4 37.0 C139.4 42.2 137.0 48.3 137.0 54.0 C137.0 59.7 139.2 65.8 139.4 71.0 C139.6 76.3 139.2 81.2 138.2 85.7 C137.2 90.1 135.8 95.0 133.4 97.8 C130.9 100.7 126.5 100.3 123.6 102.7 C120.8 105.1 118.3 108.4 116.3 112.4 C114.3 116.5 112.3 124.6 111.4 127.0"/><path d="M33.5 112.4 C34.1 113.3 36.8 114.9 37.2 117.3 C37.6 119.7 36.2 125.4 36.0 127.0"/><path d="M33.5 1.7 C40.8 1.4 65.2 0.6 77.4 0.4 C89.5 0.3 95.6 0.9 106.6 0.9 C117.5 0.9 137.0 0.5 143.1 0.4"/><path d="M137.0 22.3 C138.8 22.6 145.1 22.3 148.0 23.6 C150.8 24.8 152.2 28.2 154.0 29.7 C155.9 31.2 152.0 32.2 158.9 32.6 C165.8 33.0 188.1 31.4 195.4 32.1 C202.7 32.7 199.1 35.3 202.7 36.5 C206.4 37.7 210.0 38.8 217.4 39.4 C224.7 40.0 238.9 40.1 246.6 39.9 C254.3 39.7 258.5 38.7 263.6 38.2 C268.7 37.6 274.8 36.8 277.0 36.5"/><path d="M141.9 -2.0 C142.1 0.4 143.3 8.6 143.1 12.6 C142.9 16.7 141.1 20.7 140.7 22.3"/><path d="M137.0 12.6 C139.4 12.2 147.1 11.8 151.6 10.2 C156.1 8.6 159.7 4.3 163.8 2.9 C167.8 1.4 173.9 1.9 176.0 1.7"/><path d="M212.5 0.9 C216.1 1.4 227.5 3.8 234.4 4.1 C241.3 4.3 246.8 2.8 253.9 2.4 C261.0 2.0 273.1 1.8 277.0 1.7"/><path d="M246.6 39.9 C247.4 41.4 250.5 45.2 251.4 49.1 C252.3 53.1 251.9 58.1 251.9 63.7 C251.9 69.4 251.5 76.3 251.4 83.2 C251.4 90.1 251.8 99.0 251.4 105.1 C251.0 111.2 249.2 115.7 249.0 119.7 C248.8 123.8 250.0 127.9 250.2 129.5"/><path d="M251.9 63.7 C253.9 62.5 260.0 59.3 263.6 56.4 C267.2 53.6 271.1 49.1 273.4 46.7 C275.6 44.3 276.4 42.6 277.0 41.8"/><path d="M251.4 100.3 C253.5 99.5 259.4 97.0 263.6 95.4 C267.9 93.8 274.8 91.3 277.0 90.5"/><path d="M183.3 109.5 C183.5 111.2 184.1 116.4 184.5 119.7 C184.9 123.1 185.5 127.9 185.7 129.5"/><path d="M249.0 107.6 C247.4 108.8 241.7 111.2 239.3 114.9 C236.8 118.5 235.2 127.0 234.4 129.5"/><path d="M137.0 99.0 C137.8 98.4 140.7 98.8 141.9 95.4 C143.1 91.9 144.5 84.4 144.3 78.4 C144.1 72.3 141.5 64.6 140.7 58.9 C139.8 53.2 139.2 48.7 139.4 44.3 C139.6 39.8 141.5 34.1 141.9 32.1"/><path d="M29.9 125.0 C30.0 127.8 29.6 137.1 30.6 141.6 C31.6 146.0 33.2 148.2 36.0 151.8 C38.7 155.4 45.1 158.7 46.9 163.2 C48.7 167.8 47.1 173.3 46.9 179.1 C46.7 184.9 45.5 191.6 45.7 198.0 C45.9 204.5 48.1 211.8 48.1 217.5 C48.1 223.2 46.5 228.5 45.7 232.1 C44.9 235.8 43.7 238.2 43.3 239.4"/><path d="M0.7 154.2 C3.3 153.8 11.5 152.6 16.5 151.8 C21.5 151.0 28.2 149.8 30.6 149.3"/><path d="M0.7 164.0 C3.3 164.6 11.8 166.0 16.5 167.6 C21.1 169.2 26.4 171.1 28.7 173.7 C30.9 176.3 28.7 180.8 29.9 183.4 C31.1 186.1 33.1 188.7 36.0 189.5 C38.8 190.3 44.7 189.5 46.9 188.3 C49.1 187.1 48.9 183.2 49.3 182.2"/><path d="M46.9 163.2 C49.6 162.9 57.7 161.4 62.7 161.5 C67.8 161.6 72.1 163.8 77.4 164.0 C82.6 164.2 89.1 163.1 94.4 162.7 C99.7 162.3 105.6 160.1 109.0 161.5 C112.4 162.9 113.7 169.6 114.6 171.3"/><path d="M30.6 141.6 C28.2 140.8 21.5 137.7 16.5 137.2 C11.5 136.6 3.3 138.2 0.7 138.4"/><path d="M109.0 125.0 C108.8 127.4 107.6 134.7 107.8 139.6 C108.0 144.5 109.1 148.9 110.2 154.2 C111.4 159.5 112.8 166.4 114.6 171.3 C116.4 176.1 118.9 179.0 121.2 183.4 C123.5 187.9 128.1 192.4 128.5 198.0 C128.9 203.7 124.8 212.7 123.6 217.5 C122.4 222.4 120.8 223.2 121.2 227.3 C121.6 231.3 125.6 237.4 126.0 241.9 C126.5 246.3 124.0 252.0 123.6 254.0"/><path d="M46.9 179.1 C50.4 179.2 64.0 176.6 67.6 179.8 C71.3 182.9 69.6 193.4 68.8 198.0 C68.0 202.7 66.0 204.9 62.7 207.8 C59.5 210.6 51.6 213.9 49.3 215.1"/><path d="M67.6 179.8 C71.3 179.8 85.1 177.6 89.5 179.8 C94.0 182.0 92.4 188.9 94.4 193.2 C96.4 197.4 97.6 202.9 101.7 205.4 C105.8 207.8 112.7 207.8 118.7 207.8 C124.8 207.8 135.0 205.8 138.2 205.4"/><path d="M48.1 217.5 C51.4 219.1 61.5 225.2 67.6 227.3 C73.7 229.3 78.6 229.5 84.7 229.7 C90.7 229.9 98.0 228.9 104.1 228.5 C110.2 228.1 118.3 227.5 121.2 227.3"/><path d="M114.6 171.3 C116.9 171.5 123.7 170.5 128.5 172.5 C133.2 174.5 140.7 181.6 143.1 183.4"/><path d="M101.7 125.0 C101.9 127.4 102.5 133.5 102.9 139.6 C103.3 145.7 103.9 157.9 104.1 161.5"/><path d="M132.1 183.9 C135.4 183.8 146.7 184.0 151.6 182.9 C156.5 181.9 156.9 179.9 161.3 177.3 C165.8 174.8 171.9 170.5 178.4 167.6 C184.9 164.8 193.8 161.9 200.3 160.3 C206.8 158.7 212.5 158.1 217.4 157.9 C222.2 157.7 225.5 159.5 229.5 159.1 C233.6 158.7 238.0 156.3 241.7 155.4 C245.4 154.5 248.3 154.1 251.4 153.7 C254.6 153.4 256.4 153.1 260.7 153.2 C265.0 153.4 274.3 154.5 277.0 154.7"/><path d="M151.6 183.4 C155.3 183.8 167.8 184.9 173.5 185.9 C179.2 186.9 181.2 188.3 185.7 189.5 C190.2 190.7 195.4 192.6 200.3 193.2 C205.2 193.8 210.9 192.0 214.9 193.2 C219.0 194.4 221.8 198.0 224.7 200.5 C227.5 202.9 230.1 205.8 232.0 207.8 C233.8 209.7 235.0 211.4 235.6 212.2"/><path d="M255.1 125.0 C255.2 127.4 254.6 134.9 255.6 139.6 C256.5 144.3 260.4 148.4 260.7 153.2 C261.0 158.1 259.1 163.4 257.5 168.8 C256.0 174.3 253.3 181.1 251.4 185.9 C249.5 190.7 248.1 193.9 246.1 197.6 C244.1 201.2 241.0 205.4 239.3 207.8 C237.5 210.2 237.4 210.1 235.6 212.2 C233.8 214.2 230.5 216.6 228.3 220.0 C226.1 223.3 223.4 226.5 222.2 232.1 C221.0 237.8 221.2 250.4 221.0 254.0"/><path d="M235.6 212.2 C236.6 214.7 239.5 222.7 241.7 227.3 C243.9 231.8 247.4 236.2 249.0 239.4 C250.6 242.7 251.0 245.5 251.4 246.7"/><path d="M235.6 212.2 C237.4 211.6 241.9 209.9 246.6 209.0 C251.2 208.1 258.5 207.2 263.6 206.6 C268.7 206.0 274.8 205.6 277.0 205.4"/><path d="M260.7 153.2 C261.2 155.4 262.1 161.0 263.6 166.4 C265.1 171.8 267.5 180.6 269.7 185.9 C271.9 191.1 275.8 196.0 277.0 198.0"/><path d="M185.7 125.0 C185.4 126.2 184.0 130.1 183.7 132.3 C183.5 134.5 184.4 137.4 184.5 138.4"/><path d="M234.4 125.0 L235.6 132.3"/><path d="M251.4 153.7 C252.3 155.4 255.3 161.4 256.3 164.0 C257.3 166.5 257.3 168.0 257.5 168.8"/><path d="M168.7 220.0 C170.7 220.8 176.8 222.8 180.8 224.8 C184.9 226.9 190.2 232.5 193.0 232.1 C195.8 231.7 196.9 225.2 197.9 222.4 C198.9 219.6 198.9 216.3 199.1 215.1"/><path d="M193.0 232.1 C193.4 234.6 195.2 243.1 195.4 246.7 C195.6 250.4 194.4 252.8 194.2 254.0"/><path d="M260.7 153.2 C262.0 152.2 265.8 148.2 268.5 146.9 C271.2 145.7 275.6 145.9 277.0 145.7"/></g><path d="M-0.6 162.3 L46.9 179.1 L88.3 179.1 L88.3 171.3 L116.3 171.3 L120.0 174.9 L126.0 182.2 L137.0 188.8" fill="none" stroke="#8f8f8f" stroke-width="0.55"/><path d="M135.8 188.8 C136.0 189.1 136.2 189.2 137.0 190.7 C137.8 192.3 139.4 195.0 140.7 198.0 C141.9 201.1 141.9 205.6 144.3 209.0 C146.7 212.5 151.6 217.1 155.3 218.7 C158.9 220.4 163.6 220.6 166.2 218.7 C168.9 216.9 169.3 210.2 171.1 207.8 C172.9 205.4 174.7 204.5 177.2 204.1 C179.6 203.7 182.9 204.5 185.7 205.4 C188.5 206.2 191.8 207.0 194.2 209.0 C196.7 211.0 198.1 214.1 200.3 217.5 C202.5 221.0 205.2 226.0 207.6 229.7 C210.0 233.4 212.9 236.6 214.9 239.4 C216.9 242.3 218.9 244.3 219.8 246.7 C220.7 249.2 220.4 252.8 220.5 254.0" fill="none" stroke="#8f8f8f" stroke-width="0.55"/><path d="M-0.6 105.4 L6.7 105.9 L16.5 107.6 L28.7 108.8 L45.7 112.0 L60.3 114.4 L70.0 108.8 L81.0 103.2 L92.7 107.1 L94.4 111.2 L104.1 112.4 L113.9 111.0 L123.6 112.9 L134.1 114.4 L137.0 114.4 L146.7 112.4 L155.3 110.0 L161.3 111.2 L171.1 108.8 L183.3 109.5 L197.9 108.8 L214.9 108.8 L222.2 105.1 L239.3 103.2 L249.0 105.1 L263.6 105.1 L278.2 105.1" fill="none" stroke="#8ac887" stroke-width="2.4" stroke-linejoin="round" opacity="0.95"/><path d="M30.6 171.6 L32.4 176.3 L37.4 176.6 L33.5 179.8 L34.8 184.6 L30.6 181.9 L26.4 184.6 L27.7 179.8 L23.8 176.6 L28.8 176.3 Z" fill="#f6a335" stroke="#f6a335" stroke-width="0.8" stroke-linejoin="round"/><path d="M2.4 109.3 C-0.8 106.3 -1.2 101.7 2.4 101.7 C6.0 101.7 5.6 106.3 2.4 109.3 Z" fill="#e6433b"/><circle cx="2.4" cy="104.5" r="1.3" fill="#fff"/><text x="165.0" y="23.1" font-size="6.6" fill="#2a2a2a" font-weight="700" paint-order="stroke" stroke="#f7f5ef" stroke-width="0.9" stroke-linejoin="round" textLength="52.3" lengthAdjust="spacingAndGlyphs" dominant-baseline="central">United States</text><text x="30.4" y="35.7" font-size="3.6" fill="#9a9a94" textLength="12.2" lengthAdjust="spacingAndGlyphs" dominant-baseline="central">UTAH</text><text x="118.7" y="43.5" font-size="3.6" fill="#9a9a94" textLength="21.9" lengthAdjust="spacingAndGlyphs" dominant-baseline="central">COLORADO</text><text x="27.4" y="125.6" font-size="3.6" fill="#9a9a94" textLength="17.5" lengthAdjust="spacingAndGlyphs" dominant-baseline="central">ARIZONA</text><text x="228.3" y="47.4" font-size="3.6" fill="#9a9a94" textLength="15.8" lengthAdjust="spacingAndGlyphs" dominant-baseline="central">KANSAS</text><text x="241.7" y="99.8" font-size="3.6" fill="#9a9a94" textLength="22.6" lengthAdjust="spacingAndGlyphs" dominant-baseline="central">OKLAHOMA</text><text x="109.5" y="129.4" font-size="3.6" fill="#9a9a94" textLength="25.6" lengthAdjust="spacingAndGlyphs" dominant-baseline="central">NEW MEXICO</text><text x="49.3" y="197.3" font-size="3.6" fill="#9a9a94" textLength="15.8" lengthAdjust="spacingAndGlyphs" dominant-baseline="central">SONORA</text><text x="113.1" y="211.2" font-size="3.6" fill="#9a9a94" textLength="25.1" lengthAdjust="spacingAndGlyphs" dominant-baseline="central">CHIHUAHUA</text><text x="219.8" y="175.9" font-size="3.6" fill="#9a9a94" textLength="12.7" lengthAdjust="spacingAndGlyphs" dominant-baseline="central">TEXAS</text><text x="176.4" y="235.5" font-size="3.6" fill="#9a9a94" textLength="20.2" lengthAdjust="spacingAndGlyphs" dominant-baseline="central">COAHUILA</text><text x="5.5" y="105.4" font-size="4.4" fill="#3c3c3c" paint-order="stroke" stroke="#f7f5ef" stroke-width="0.9" stroke-linejoin="round" textLength="16.6" lengthAdjust="spacingAndGlyphs" dominant-baseline="central">Kingman</text><text x="130.4" y="19.9" font-size="4.4" fill="#3c3c3c" paint-order="stroke" stroke="#f7f5ef" stroke-width="0.9" stroke-linejoin="round" textLength="10.2" lengthAdjust="spacingAndGlyphs" dominant-baseline="central">Denver</text><text x="23.1" y="145.0" font-size="4.6" fill="#3c3c3c" paint-order="stroke" stroke="#f7f5ef" stroke-width="0.9" stroke-linejoin="round" textLength="14.9" lengthAdjust="spacingAndGlyphs" dominant-baseline="central">Phoenix</text><text x="40.3" y="166.9" font-size="4.6" fill="#3c3c3c" paint-order="stroke" stroke="#f7f5ef" stroke-width="0.9" stroke-linejoin="round" textLength="13.9" lengthAdjust="spacingAndGlyphs" dominant-baseline="central">Tucson</text><text x="116.3" y="171.3" font-size="4.6" fill="#3c3c3c" paint-order="stroke" stroke="#f7f5ef" stroke-width="0.9" stroke-linejoin="round" textLength="14.1" lengthAdjust="spacingAndGlyphs" dominant-baseline="central">El Paso</text><text x="254.6" y="149.8" font-size="4.6" fill="#3c3c3c" paint-order="stroke" stroke="#f7f5ef" stroke-width="0.9" stroke-linejoin="round" textLength="11.4" lengthAdjust="spacingAndGlyphs" dominant-baseline="central">Dallas</text><text x="240.5" y="194.2" font-size="4.6" fill="#3c3c3c" paint-order="stroke" stroke="#f7f5ef" stroke-width="0.9" stroke-linejoin="round" textLength="12.2" lengthAdjust="spacingAndGlyphs" dominant-baseline="central">Austin</text><text x="223.7" y="215.8" font-size="4.6" fill="#3c3c3c" paint-order="stroke" stroke="#f7f5ef" stroke-width="0.9" stroke-linejoin="round" textLength="22.9" lengthAdjust="spacingAndGlyphs" dominant-baseline="central">San Antonio</text><circle cx="30.6" cy="141.6" r="0.7" fill="#fff" stroke="#444" stroke-width="0.4"/><circle cx="46.9" cy="163.2" r="0.7" fill="#fff" stroke="#444" stroke-width="0.4"/><circle cx="114.6" cy="171.3" r="0.7" fill="#fff" stroke="#444" stroke-width="0.4"/><circle cx="260.7" cy="153.2" r="0.7" fill="#fff" stroke="#444" stroke-width="0.4"/><circle cx="246.1" cy="197.6" r="0.7" fill="#fff" stroke="#444" stroke-width="0.4"/><circle cx="235.6" cy="212.2" r="0.7" fill="#fff" stroke="#444" stroke-width="0.4"/><circle cx="136.5" cy="22.8" r="0.7" fill="#fff" stroke="#444" stroke-width="0.4"/><text x="37.9" y="246.3" font-size="3.4" fill="#5b8fc4" font-style="italic" transform="rotate(62 37.9 246.3)" text-anchor="middle">Gulf of Cal</text></g></svg><div style="position:absolute;left:32px;top:28px;width:857px;height:482px;box-sizing:border-box;border:1px solid #1d1d1d;border-bottom-width:1.5px;"></div></div>
<div class="scr" style="left:896px"><div style="position:absolute;left:32px;top:28px;width:857px;height:482px;box-sizing:border-box;background:#efefef;"></div><div style="position:absolute;left:33.00px;top:29.00px;width:855.00px;height:16.40px;background:#183764;"></div><div style="position:absolute;left:33.00px;top:45.40px;width:855.00px;height:17.60px;background:#162e4f;box-shadow:0 0.5px 1.5px rgba(0,0,0,.3);border-bottom:1px solid #0d2247;box-sizing:border-box;"></div><div class="t" style="left:39.00px;top:32.75px;height:11.96px;line-height:11.96px;font-size:9.2px;color:#e4e9f2;transform:scaleX(0.8131);transform-origin:0 50%;">EDGE</div><svg style="left:44px;top:30px" width="10" height="15"><line x1="3.2" y1="1.6" x2="6.6" y2="13.4" stroke="#c9a548" stroke-width="0.8"/><line x1="3.9" y1="1.6" x2="7.3" y2="13.4" stroke="#183764" stroke-width="0.8"/></svg><div class="t" style="left:67.00px;top:33.41px;height:9.49px;line-height:9.49px;font-size:7.3px;color:#9cb0cd;transform:scaleX(0.9382);transform-origin:0 50%;">EVENT MANAGEMENT</div><svg style="left:150.5px;top:33.5px" width="8" height="8" viewBox="0 0 8 8"><path d="M0.6 3.9 L4 0.9 L7.4 3.9 M1.5 3.3 V7 H3.2 V5 H4.8 V7 H6.5 V3.3" fill="none" stroke="#b9c7dc" stroke-width="0.8" stroke-linejoin="round" stroke-linecap="round"/></svg><div class="t" style="left:824.00px;top:33.63px;height:8.06px;line-height:8.06px;font-size:6.2px;color:#c3cfe0;transform:scaleX(0.9988);transform-origin:0 50%;">Welcome Tristan</div><svg style="left:876px;top:34px" width="9" height="6" viewBox="0 0 9 6"><path d="M1 1.3 L4.5 4.7 L8 1.3" fill="none" stroke="#c3cfe0" stroke-width="0.7"/></svg><svg style="left:38px;top:47px" width="10" height="14" viewBox="0 0 10 14"><path d="M7.6 1.7 L2 6.9 L7.6 12.1" fill="none" stroke="#fff" stroke-width="1.1"/></svg><div class="t" style="left:56.00px;top:49.28px;height:11.18px;line-height:11.18px;font-size:8.6px;color:#fff;font-weight:700;transform:scaleX(0.8846);transform-origin:0 50%;">Home Time Request</div><div class="t" style="left:135.10px;top:49.28px;height:11.18px;line-height:11.18px;font-size:8.6px;color:#fff;font-weight:700;letter-spacing:0.044px;">9/20/20</div><div class="t" style="left:172.60px;top:49.28px;height:11.18px;line-height:11.18px;font-size:8.6px;color:#fff;font-weight:700;transform:scaleX(0.9172);transform-origin:0 50%;">7m</div><div class="card" style="position:absolute;left:43.00px;top:74.00px;width:141.00px;height:103.00px;background:#fff;"></div><div style="position:absolute;left:43.00px;top:74.00px;width:141.00px;height:21.00px;background:#fafafa;border-bottom:1px solid #dedede;box-sizing:border-box;box-shadow:0 1px 1px rgba(0,0,0,.07);"></div><div class="t" style="left:53.60px;top:82.20px;height:10.92px;line-height:10.92px;font-size:8.4px;color:#222;transform:scaleX(0.9767);transform-origin:0 50%;-webkit-text-stroke:0.32px currentColor;">Driver Information</div><svg style="left:54.45px;top:100.85px" width="36.6" height="36.6" viewBox="0 0 36 36">
<defs><clipPath id="avc"><circle cx="18" cy="18" r="16.6"/></clipPath><filter id="avb" x="-10%" y="-10%" width="120%" height="120%"><feGaussianBlur stdDeviation="0.45"/></filter></defs>
<circle cx="18" cy="18" r="17.5" fill="#fff" stroke="#3a4e78" stroke-width="1"/>
<g clip-path="url(#avc)"><g filter="url(#avb)">
<rect x="0" y="0" width="36" height="36" fill="#dde1e5"/>
<rect x="24" y="20" width="12" height="16" fill="#e9eaec"/>
<rect x="19.2" y="1.8" width="3.6" height="2.4" fill="#4a6fb5"/>
<circle cx="31.1" cy="9.6" r="1.5" fill="#e0525c"/><circle cx="31.3" cy="13.9" r="1.6" fill="#4ea3e6"/>
<circle cx="33.2" cy="23.5" r="1.3" fill="#eab9a8"/>
<path d="M3 36 C4 30 6.5 27.5 10.5 24.5 L15 27 L23 28.5 C27 30 30.5 32.5 32 36 Z" fill="#2a3e6a"/>
<path d="M13.6 24.5 L23.6 25.5 L23 30.4 L17.5 31.2 L13.8 28 Z" fill="#b98268"/>
<ellipse cx="18.9" cy="19.6" rx="8.3" ry="9.6" fill="#cf9a80" transform="rotate(-6 18.9 19.6)"/>
<path d="M10.2 17.5 C8.6 9 12.5 4.6 18.6 4.4 C25 4.2 28.6 8.6 27.6 16.4 C26.8 13 25.6 11.4 23.6 11.2 C20 10.9 15.5 11.2 13 12.4 C11.4 13.4 10.8 15.2 10.2 17.5 Z" fill="#2e2623"/>
<path d="M14.6 17.2 L17.4 17 M20.6 16.8 L23.6 17" stroke="#4a342c" stroke-width="0.9"/>
<path d="M15.2 22.9 C17.4 25.4 21 25.4 23 22.7 C20.6 23.5 17.6 23.6 15.2 22.9 Z" fill="#f4ecea"/>
<path d="M12 23 C13.5 27.5 17 29.6 20 29.4 C23.4 29 25.6 26.4 26.6 22.5 C25 26 22.6 27.6 19.6 27.8 C16.6 27.9 13.8 26.2 12 23 Z" fill="#a67560" opacity="0.7"/>
</g></g></svg><div class="t" style="left:108.70px;top:108.23px;height:10.14px;line-height:10.14px;font-size:7.8px;color:#222;font-weight:700;transform:scaleX(0.8631);transform-origin:0 50%;">Jason Connelley</div><div class="t" style="left:109.50px;top:121.33px;height:10.14px;line-height:10.14px;font-size:7.8px;color:#333;transform:scaleX(0.9431);transform-origin:0 50%;-webkit-text-stroke:0.18px currentColor;">551156</div><div class="t" style="left:57.50px;top:144.23px;height:10.14px;line-height:10.14px;font-size:7.8px;color:#8a8a8a;transform:scaleX(0.8956);transform-origin:0 50%;">Phone</div><div class="t" style="left:108.70px;top:144.03px;height:10.14px;line-height:10.14px;font-size:7.8px;color:#222;font-weight:700;transform:scaleX(0.9429);transform-origin:0 50%;">531-234-8989</div><div class="t" style="left:57.50px;top:156.63px;height:10.14px;line-height:10.14px;font-size:7.8px;color:#8a8a8a;transform:scaleX(0.9193);transform-origin:0 50%;">Manager</div><div class="t" style="left:108.70px;top:156.43px;height:10.14px;line-height:10.14px;font-size:7.8px;color:#222;transform:scaleX(0.9225);transform-origin:0 50%;-webkit-text-stroke:0.18px currentColor;">Jason Spenser</div><div class="card" style="position:absolute;left:43.00px;top:183.00px;width:141.00px;height:199.60px;background:#fff;"></div><div style="position:absolute;left:43.00px;top:183.00px;width:141.00px;height:21.60px;background:#fff;border-bottom:1px solid #dedede;box-sizing:border-box;box-shadow:0 1px 1px rgba(0,0,0,.07);"></div><div class="t" style="left:54.00px;top:191.30px;height:10.92px;line-height:10.92px;font-size:8.4px;color:#222;transform:scaleX(0.9628);transform-origin:0 50%;-webkit-text-stroke:0.32px currentColor;">Home Time Calculator</div><div class="t" style="left:55.50px;top:216.14px;height:9.88px;line-height:9.88px;font-size:7.6px;color:#808080;transform:scaleX(0.9396);transform-origin:0 50%;">Days to Submit Request</div><div class="t" style="left:166.06px;top:216.22px;height:12.48px;line-height:12.48px;font-size:9.6px;color:#222;font-weight:700;">4</div><div class="t" style="left:55.50px;top:235.74px;height:9.88px;line-height:9.88px;font-size:7.6px;color:#808080;transform:scaleX(0.9436);transform-origin:0 50%;">Days out</div><div class="t" style="left:160.72px;top:235.82px;height:12.48px;line-height:12.48px;font-size:9.6px;color:#222;font-weight:700;transform:scaleX(0.9552);transform-origin:10.68px 50%;">14</div><div class="t" style="left:55.50px;top:255.44px;height:9.88px;line-height:9.88px;font-size:7.6px;color:#808080;transform:scaleX(0.9490);transform-origin:0 50%;">Last Request</div><div class="t" style="left:143.62px;top:255.52px;height:12.48px;line-height:12.48px;font-size:9.6px;color:#222;font-weight:700;letter-spacing:0.218px;">7/2/20</div><div class="t" style="left:55.50px;top:275.04px;height:9.88px;line-height:9.88px;font-size:7.6px;color:#808080;transform:scaleX(0.9454);transform-origin:0 50%;">Days Available</div><div class="t" style="left:166.06px;top:275.12px;height:12.48px;line-height:12.48px;font-size:9.6px;color:#222;font-weight:700;">3</div><div class="t" style="left:55.50px;top:294.74px;height:9.88px;line-height:9.88px;font-size:7.6px;color:#808080;transform:scaleX(0.9290);transform-origin:0 50%;">Request By</div><div class="t" style="left:143.62px;top:294.82px;height:12.48px;line-height:12.48px;font-size:9.6px;color:#222;font-weight:700;letter-spacing:0.218px;">9/1/20</div><div class="card" style="position:absolute;left:43.00px;top:390.10px;width:140.60px;height:118.40px;background:#fff;"></div><div style="position:absolute;left:43.00px;top:390.10px;width:140.60px;height:22.10px;background:#fafafa;border-bottom:1px solid #dedede;box-sizing:border-box;box-shadow:0 1px 1px rgba(0,0,0,.07);"></div><div class="t" style="left:54.00px;top:396.20px;height:10.92px;line-height:10.92px;font-size:8.4px;color:#222;transform:scaleX(0.9599);transform-origin:0 50%;-webkit-text-stroke:0.32px currentColor;">Hours of Service</div><div class="t" style="left:53.40px;top:424.41px;height:10.66px;line-height:10.66px;font-size:8.2px;color:#808080;transform:scaleX(0.9815);transform-origin:0 50%;">Driver Type</div><div class="t" style="left:104.90px;top:424.18px;height:11.18px;line-height:11.18px;font-size:8.6px;color:#222;font-weight:700;transform:scaleX(0.8856);transform-origin:0 50%;">Solo</div><div class="t" style="left:55.00px;top:451.70px;height:8.58px;line-height:8.58px;font-size:6.6px;color:#222;letter-spacing:0.150px;-webkit-text-stroke:0.18px currentColor;">Driver</div><div style="position:absolute;left:55.00px;top:460.60px;width:118.60px;height:0.90px;background:#9a9a9a;"></div><div class="t" style="left:55.80px;top:471.08px;height:9.1px;line-height:9.1px;font-size:7px;color:#222;letter-spacing:0.153px;-webkit-text-stroke:0.18px currentColor;">11 hr</div><div style="position:absolute;left:75.40px;top:473.50px;width:98.20px;height:3.00px;background:#c6d6ee;border-radius:1.5px;"></div><div style="position:absolute;left:75.40px;top:473.50px;width:78.60px;height:3.00px;background:#2b5eb3;border-radius:1.5px;"></div><div class="t" style="left:154.50px;top:480.40px;height:6.5px;line-height:6.5px;font-size:5px;color:#8a8a8a;letter-spacing:0.203px;">4 hr left</div><div class="t" style="left:55.80px;top:492.18px;height:9.1px;line-height:9.1px;font-size:7px;color:#222;letter-spacing:0.049px;-webkit-text-stroke:0.18px currentColor;">14 hr</div><div style="position:absolute;left:75.40px;top:494.60px;width:98.20px;height:3.00px;background:#c6d6ee;border-radius:1.5px;"></div><div style="position:absolute;left:75.40px;top:494.60px;width:72.60px;height:3.00px;background:#2b5eb3;border-radius:1.5px;"></div><div class="t" style="left:151.23px;top:501.50px;height:6.5px;line-height:6.5px;font-size:5px;color:#8a8a8a;letter-spacing:0.234px;">10 hr left</div><div class="card" style="position:absolute;left:188.40px;top:73.80px;width:408.90px;height:241.20px;background:#fff;"></div><div style="position:absolute;left:188.40px;top:73.80px;width:408.90px;height:24.30px;background:#fafafa;border-bottom:1px solid #dedede;box-sizing:border-box;box-shadow:0 1px 1px rgba(0,0,0,.07);"></div><div class="t" style="left:198.70px;top:82.04px;height:12.22px;line-height:12.22px;font-size:9.4px;color:#1d1d1d;font-weight:700;transform:scaleX(0.8933);transform-origin:0 50%;">Schedule Calendar</div><div class="t" style="left:198.70px;top:108.54px;height:8.97px;line-height:8.97px;font-size:6.9px;color:#b0b0b0;transform:scaleX(0.9481);transform-origin:0 50%;">Home Location</div><div class="t" style="left:251.10px;top:108.54px;height:8.97px;line-height:8.97px;font-size:6.9px;color:#222;transform:scaleX(0.9308);transform-origin:0 50%;-webkit-text-stroke:0.18px currentColor;">Pheonix, Arizona</div><div class="t" style="left:322.70px;top:108.54px;height:8.97px;line-height:8.97px;font-size:6.9px;color:#b0b0b0;transform:scaleX(0.9438);transform-origin:0 50%;">Division</div><div class="t" style="left:355.40px;top:108.54px;height:8.97px;line-height:8.97px;font-size:6.9px;color:#222;transform:scaleX(0.9605);transform-origin:0 50%;-webkit-text-stroke:0.18px currentColor;">Van</div><div class="t" style="left:392.20px;top:108.54px;height:8.97px;line-height:8.97px;font-size:6.9px;color:#b0b0b0;transform:scaleX(0.9206);transform-origin:0 50%;">Miles from Home</div><div class="t" style="left:449.00px;top:108.54px;height:8.97px;line-height:8.97px;font-size:6.9px;color:#222;transform:scaleX(0.9555);transform-origin:0 50%;-webkit-text-stroke:0.18px currentColor;">320</div><div style="position:absolute;left:489.00px;top:105.00px;width:47.40px;height:14.10px;background:#d2e9d2;border-radius:7.1px;"></div><div class="t" style="left:497.85px;top:108.96px;height:7.28px;line-height:7.28px;font-size:5.6px;color:#3b9b3b;font-weight:700;letter-spacing:0.094px;">ASSIGNED</div><svg style="left:556px;top:106.5px" width="10" height="16" viewBox="0 0 10 16"><rect x="1.3" y="2" width="6.6" height="6.8" rx="1" fill="#fff" stroke="#2b5eb3" stroke-width="1.1"/><path d="M3 0.7 V2.6 M6.2 0.7 V2.6" stroke="#2b5eb3" stroke-width="1.1"/><rect x="1.3" y="2" width="6.6" height="1.6" fill="#2b5eb3"/><path d="M4.2 8.2 C4.2 7 5.6 7 5.6 8.2 L5.6 9.6 C7.2 9.5 8.6 10 8.4 11.6 C8.2 13 7.4 13.6 6.2 13.6 C4.8 13.6 4.2 12.6 3.4 11.2 C3 10.4 3.8 10 4.2 10.6 Z" fill="#fff" stroke="#222" stroke-width="0.7" stroke-linejoin="round"/></svg><div class="t" style="left:568.80px;top:108.23px;height:8.06px;line-height:8.06px;font-size:6.2px;color:#8a8a8a;transform:scaleX(0.9905);transform-origin:0 50%;">View</div><div style="position:absolute;left:447.70px;top:125.60px;width:132.10px;height:18.30px;background:#fff;box-shadow:0 1px 2.5px rgba(0,0,0,.3),0 0 1px rgba(0,0,0,.15);border-radius:1px;"></div><svg style="left:457px;top:131.3px" width="8" height="8" viewBox="0 0 8 8"><rect x="0.6" y="0.6" width="6.4" height="6.4" rx="0.8" fill="#fff" stroke="#555" stroke-width="0.8"/><path d="M2 3.9 L3.4 5.2 L5.8 2.4" fill="none" stroke="#555" stroke-width="0.8"/></svg><div class="t" style="left:472.70px;top:130.28px;height:9.1px;line-height:9.1px;font-size:7px;color:#222;letter-spacing:0.038px;-webkit-text-stroke:0.18px currentColor;">Quarter</div><svg style="left:528px;top:131.3px" width="8" height="8" viewBox="0 0 8 8"><rect x="0.6" y="0.6" width="6.4" height="6.4" rx="0.8" fill="#fff" stroke="#555" stroke-width="0.8"/></svg><div class="t" style="left:543.80px;top:130.28px;height:9.1px;line-height:9.1px;font-size:7px;color:#222;letter-spacing:0.209px;-webkit-text-stroke:0.18px currentColor;">Month</div><div class="t" style="left:252.54px;top:157.21px;height:10.66px;line-height:10.66px;font-size:8.2px;color:#1d1d1d;font-weight:700;transform:scaleX(0.9400);transform-origin:0 50%;">Aug</div><div class="t" style="left:269.53px;top:157.21px;height:10.66px;line-height:10.66px;font-size:8.2px;color:#b4b4b4;transform:scaleX(0.9500);transform-origin:0 50%;">2020</div><div class="t" style="left:216.76px;top:176.10px;height:8.58px;line-height:8.58px;font-size:6.6px;color:#3a3a3a;-webkit-text-stroke:0.18px currentColor;">Su</div><div class="t" style="left:232.52px;top:176.10px;height:8.58px;line-height:8.58px;font-size:6.6px;color:#3a3a3a;-webkit-text-stroke:0.18px currentColor;">Mo</div><div class="t" style="left:249.67px;top:176.10px;height:8.58px;line-height:8.58px;font-size:6.6px;color:#3a3a3a;-webkit-text-stroke:0.18px currentColor;">Tu</div><div class="t" style="left:264.81px;top:176.10px;height:8.58px;line-height:8.58px;font-size:6.6px;color:#3a3a3a;-webkit-text-stroke:0.18px currentColor;">We</div><div class="t" style="left:282.15px;top:176.10px;height:8.58px;line-height:8.58px;font-size:6.6px;color:#3a3a3a;-webkit-text-stroke:0.18px currentColor;">Th</div><div class="t" style="left:299.19px;top:176.10px;height:8.58px;line-height:8.58px;font-size:6.6px;color:#3a3a3a;-webkit-text-stroke:0.18px currentColor;">Fr</div><div class="t" style="left:314.56px;top:176.10px;height:8.58px;line-height:8.58px;font-size:6.6px;color:#3a3a3a;-webkit-text-stroke:0.18px currentColor;">Sa</div><div style="position:absolute;left:312.20px;top:188.00px;width:12.40px;height:9.60px;background:#eeeeee;border-radius:4.8px 0px 0px 4.8px;"></div><div style="position:absolute;left:215.00px;top:204.55px;width:43.80px;height:9.60px;background:#eeeeee;border-radius:0px 4.8px 4.8px 0px;"></div><div style="position:absolute;left:263.30px;top:204.55px;width:28.10px;height:9.60px;background:#d7e7fb;border-radius:4.8px 4.8px 4.8px 4.8px;"></div><div style="position:absolute;left:295.90px;top:204.55px;width:28.70px;height:9.60px;background:#d5ead3;border-radius:4.8px 0px 0px 4.8px;"></div><div style="position:absolute;left:215.00px;top:221.10px;width:27.50px;height:9.60px;background:#d5ead3;border-radius:0px 4.8px 4.8px 0px;"></div><div style="position:absolute;left:247.00px;top:221.10px;width:77.60px;height:9.60px;background:#eeeeee;border-radius:4.8px 0px 0px 4.8px;"></div><div style="position:absolute;left:215.00px;top:237.65px;width:109.60px;height:9.60px;background:#eeeeee;border-radius:0px 0px 0px 0px;"></div><div style="position:absolute;left:215.00px;top:254.20px;width:76.40px;height:9.60px;background:#eeeeee;border-radius:0px 4.8px 4.8px 0px;"></div><div style="position:absolute;left:295.90px;top:254.20px;width:28.70px;height:9.60px;background:#d7e7fb;border-radius:4.8px 0px 0px 4.8px;"></div><div style="position:absolute;left:215.00px;top:270.75px;width:27.50px;height:9.60px;background:#d7e7fb;border-radius:0px 4.8px 4.8px 0px;"></div><div class="t" style="left:316.80px;top:189.78px;height:7.02px;line-height:7.02px;font-size:5.4px;color:#8e8e8e;">1</div><div class="t" style="left:219.00px;top:206.33px;height:7.02px;line-height:7.02px;font-size:5.4px;color:#8e8e8e;">2</div><div class="t" style="left:235.30px;top:206.33px;height:7.02px;line-height:7.02px;font-size:5.4px;color:#8e8e8e;">3</div><div class="t" style="left:251.60px;top:206.33px;height:7.02px;line-height:7.02px;font-size:5.4px;color:#8e8e8e;">4</div><div class="t" style="left:267.90px;top:206.33px;height:7.02px;line-height:7.02px;font-size:5.4px;color:#2b5eb3;font-weight:700;text-decoration:underline;text-decoration-thickness:0.6px;text-underline-offset:0.8px;">5</div><div class="t" style="left:284.20px;top:206.33px;height:7.02px;line-height:7.02px;font-size:5.4px;color:#2b5eb3;font-weight:700;text-decoration:underline;text-decoration-thickness:0.6px;text-underline-offset:0.8px;">6</div><div class="t" style="left:300.50px;top:206.33px;height:7.02px;line-height:7.02px;font-size:5.4px;color:#3a9a3a;font-weight:700;text-decoration:underline;text-decoration-thickness:0.6px;text-underline-offset:0.8px;">7</div><div class="t" style="left:316.80px;top:206.33px;height:7.02px;line-height:7.02px;font-size:5.4px;color:#3a9a3a;font-weight:700;text-decoration:underline;text-decoration-thickness:0.6px;text-underline-offset:0.8px;">8</div><div class="t" style="left:219.00px;top:222.88px;height:7.02px;line-height:7.02px;font-size:5.4px;color:#3a9a3a;font-weight:700;text-decoration:underline;text-decoration-thickness:0.6px;text-underline-offset:0.8px;">9</div><div class="t" style="left:233.80px;top:222.88px;height:7.02px;line-height:7.02px;font-size:5.4px;color:#3a9a3a;font-weight:700;text-decoration:underline;text-decoration-thickness:0.6px;text-underline-offset:0.8px;">10</div><div class="t" style="left:250.30px;top:222.88px;height:7.02px;line-height:7.02px;font-size:5.4px;color:#8e8e8e;">11</div><div class="t" style="left:266.40px;top:222.88px;height:7.02px;line-height:7.02px;font-size:5.4px;color:#8e8e8e;">12</div><div class="t" style="left:282.70px;top:222.88px;height:7.02px;line-height:7.02px;font-size:5.4px;color:#8e8e8e;">13</div><div class="t" style="left:299.00px;top:222.88px;height:7.02px;line-height:7.02px;font-size:5.4px;color:#8e8e8e;">14</div><div class="t" style="left:315.30px;top:222.88px;height:7.02px;line-height:7.02px;font-size:5.4px;color:#8e8e8e;">15</div><div class="t" style="left:217.50px;top:239.43px;height:7.02px;line-height:7.02px;font-size:5.4px;color:#8e8e8e;">16</div><div class="t" style="left:233.80px;top:239.43px;height:7.02px;line-height:7.02px;font-size:5.4px;color:#8e8e8e;">17</div><div class="t" style="left:250.10px;top:239.43px;height:7.02px;line-height:7.02px;font-size:5.4px;color:#8e8e8e;">18</div><div class="t" style="left:266.40px;top:239.43px;height:7.02px;line-height:7.02px;font-size:5.4px;color:#8e8e8e;">19</div><div class="t" style="left:282.70px;top:239.43px;height:7.02px;line-height:7.02px;font-size:5.4px;color:#8e8e8e;">20</div><div class="t" style="left:299.00px;top:239.43px;height:7.02px;line-height:7.02px;font-size:5.4px;color:#8e8e8e;">21</div><div style="position:absolute;left:297.40px;top:237.75px;width:9.4px;height:9.4px;box-sizing:border-box;border:0.8px solid #3b4a68;border-radius:50%;"></div><div class="t" style="left:315.30px;top:239.43px;height:7.02px;line-height:7.02px;font-size:5.4px;color:#8e8e8e;">22</div><div class="t" style="left:217.50px;top:255.98px;height:7.02px;line-height:7.02px;font-size:5.4px;color:#8e8e8e;">23</div><div class="t" style="left:233.80px;top:255.98px;height:7.02px;line-height:7.02px;font-size:5.4px;color:#8e8e8e;">24</div><div class="t" style="left:250.10px;top:255.98px;height:7.02px;line-height:7.02px;font-size:5.4px;color:#8e8e8e;">25</div><div class="t" style="left:266.40px;top:255.98px;height:7.02px;line-height:7.02px;font-size:5.4px;color:#8e8e8e;">26</div><div class="t" style="left:282.70px;top:255.98px;height:7.02px;line-height:7.02px;font-size:5.4px;color:#8e8e8e;">27</div><div class="t" style="left:299.00px;top:255.98px;height:7.02px;line-height:7.02px;font-size:5.4px;color:#2b5eb3;font-weight:700;text-decoration:underline;text-decoration-thickness:0.6px;text-underline-offset:0.8px;">28</div><div class="t" style="left:315.30px;top:255.98px;height:7.02px;line-height:7.02px;font-size:5.4px;color:#2b5eb3;font-weight:700;text-decoration:underline;text-decoration-thickness:0.6px;text-underline-offset:0.8px;">29</div><div class="t" style="left:217.50px;top:272.53px;height:7.02px;line-height:7.02px;font-size:5.4px;color:#2b5eb3;font-weight:700;text-decoration:underline;text-decoration-thickness:0.6px;text-underline-offset:0.8px;">30</div><div class="t" style="left:233.80px;top:272.53px;height:7.02px;line-height:7.02px;font-size:5.4px;color:#2b5eb3;font-weight:700;text-decoration:underline;text-decoration-thickness:0.6px;text-underline-offset:0.8px;">31</div><div class="t" style="left:376.87px;top:157.21px;height:10.66px;line-height:10.66px;font-size:8.2px;color:#1d1d1d;font-weight:700;transform:scaleX(0.9400);transform-origin:0 50%;">Sep</div><div class="t" style="left:393.00px;top:157.21px;height:10.66px;line-height:10.66px;font-size:8.2px;color:#b4b4b4;transform:scaleX(0.9500);transform-origin:0 50%;">2020</div><div class="t" style="left:340.66px;top:176.10px;height:8.58px;line-height:8.58px;font-size:6.6px;color:#3a3a3a;-webkit-text-stroke:0.18px currentColor;">Su</div><div class="t" style="left:356.42px;top:176.10px;height:8.58px;line-height:8.58px;font-size:6.6px;color:#3a3a3a;-webkit-text-stroke:0.18px currentColor;">Mo</div><div class="t" style="left:373.57px;top:176.10px;height:8.58px;line-height:8.58px;font-size:6.6px;color:#3a3a3a;-webkit-text-stroke:0.18px currentColor;">Tu</div><div class="t" style="left:388.71px;top:176.10px;height:8.58px;line-height:8.58px;font-size:6.6px;color:#3a3a3a;-webkit-text-stroke:0.18px currentColor;">We</div><div class="t" style="left:406.05px;top:176.10px;height:8.58px;line-height:8.58px;font-size:6.6px;color:#3a3a3a;-webkit-text-stroke:0.18px currentColor;">Th</div><div class="t" style="left:423.09px;top:176.10px;height:8.58px;line-height:8.58px;font-size:6.6px;color:#3a3a3a;-webkit-text-stroke:0.18px currentColor;">Fr</div><div class="t" style="left:438.46px;top:176.10px;height:8.58px;line-height:8.58px;font-size:6.6px;color:#3a3a3a;-webkit-text-stroke:0.18px currentColor;">Sa</div><div style="position:absolute;left:370.90px;top:188.00px;width:44.40px;height:9.60px;background:#d5ead3;border-radius:4.8px 4.8px 4.8px 4.8px;"></div><div style="position:absolute;left:419.80px;top:188.00px;width:28.70px;height:9.60px;background:#d7e7fb;border-radius:4.8px 0px 0px 4.8px;"></div><div style="position:absolute;left:338.90px;top:204.55px;width:27.50px;height:9.60px;background:#d7e7fb;border-radius:0px 4.8px 4.8px 0px;"></div><div style="position:absolute;left:370.90px;top:204.55px;width:28.10px;height:9.60px;background:#eeeeee;border-radius:4.8px 4.8px 4.8px 4.8px;"></div><div style="position:absolute;left:403.50px;top:204.55px;width:44.40px;height:9.60px;background:#d7e7fb;border-radius:4.8px 4.8px 4.8px 4.8px;"></div><div style="position:absolute;left:338.30px;top:221.10px;width:110.20px;height:9.60px;background:#eeeeee;border-radius:4.8px 0px 0px 4.8px;"></div><div style="position:absolute;left:338.90px;top:237.65px;width:109.60px;height:9.60px;background:#eeeeee;border-radius:0px 0px 0px 0px;"></div><div style="position:absolute;left:338.90px;top:254.20px;width:43.80px;height:9.60px;background:#eeeeee;border-radius:0px 4.8px 4.8px 0px;"></div><div style="position:absolute;left:387.20px;top:254.20px;width:11.80px;height:9.60px;background:#d5ead3;border-radius:4.8px 0px 0px 4.8px;"></div><div class="t" style="left:375.50px;top:189.78px;height:7.02px;line-height:7.02px;font-size:5.4px;color:#3a9a3a;font-weight:700;text-decoration:underline;text-decoration-thickness:0.6px;text-underline-offset:0.8px;">1</div><div class="t" style="left:391.80px;top:189.78px;height:7.02px;line-height:7.02px;font-size:5.4px;color:#3a9a3a;font-weight:700;text-decoration:underline;text-decoration-thickness:0.6px;text-underline-offset:0.8px;">2</div><div class="t" style="left:408.10px;top:189.78px;height:7.02px;line-height:7.02px;font-size:5.4px;color:#3a9a3a;font-weight:700;text-decoration:underline;text-decoration-thickness:0.6px;text-underline-offset:0.8px;">3</div><div class="t" style="left:424.40px;top:189.78px;height:7.02px;line-height:7.02px;font-size:5.4px;color:#2b5eb3;font-weight:700;text-decoration:underline;text-decoration-thickness:0.6px;text-underline-offset:0.8px;">4</div><div class="t" style="left:440.70px;top:189.78px;height:7.02px;line-height:7.02px;font-size:5.4px;color:#2b5eb3;font-weight:700;text-decoration:underline;text-decoration-thickness:0.6px;text-underline-offset:0.8px;">5</div><div class="t" style="left:342.90px;top:206.33px;height:7.02px;line-height:7.02px;font-size:5.4px;color:#2b5eb3;font-weight:700;text-decoration:underline;text-decoration-thickness:0.6px;text-underline-offset:0.8px;">6</div><div class="t" style="left:359.20px;top:206.33px;height:7.02px;line-height:7.02px;font-size:5.4px;color:#2b5eb3;font-weight:700;text-decoration:underline;text-decoration-thickness:0.6px;text-underline-offset:0.8px;">7</div><div class="t" style="left:375.50px;top:206.33px;height:7.02px;line-height:7.02px;font-size:5.4px;color:#8e8e8e;">8</div><div class="t" style="left:391.80px;top:206.33px;height:7.02px;line-height:7.02px;font-size:5.4px;color:#8e8e8e;">9</div><div class="t" style="left:406.60px;top:206.33px;height:7.02px;line-height:7.02px;font-size:5.4px;color:#2b5eb3;font-weight:700;text-decoration:underline;text-decoration-thickness:0.6px;text-underline-offset:0.8px;">10</div><div class="t" style="left:423.05px;top:206.33px;height:7.02px;line-height:7.02px;font-size:5.4px;color:#2b5eb3;font-weight:700;text-decoration:underline;text-decoration-thickness:0.6px;text-underline-offset:0.8px;">11</div><div class="t" style="left:439.20px;top:206.33px;height:7.02px;line-height:7.02px;font-size:5.4px;color:#2b5eb3;font-weight:700;text-decoration:underline;text-decoration-thickness:0.6px;text-underline-offset:0.8px;">12</div><div class="t" style="left:341.40px;top:222.88px;height:7.02px;line-height:7.02px;font-size:5.4px;color:#8e8e8e;">13</div><div class="t" style="left:357.70px;top:222.88px;height:7.02px;line-height:7.02px;font-size:5.4px;color:#8e8e8e;">14</div><div class="t" style="left:374.00px;top:222.88px;height:7.02px;line-height:7.02px;font-size:5.4px;color:#8e8e8e;">15</div><div class="t" style="left:390.30px;top:222.88px;height:7.02px;line-height:7.02px;font-size:5.4px;color:#8e8e8e;">16</div><div class="t" style="left:406.60px;top:222.88px;height:7.02px;line-height:7.02px;font-size:5.4px;color:#8e8e8e;">17</div><div class="t" style="left:422.90px;top:222.88px;height:7.02px;line-height:7.02px;font-size:5.4px;color:#8e8e8e;">18</div><div class="t" style="left:439.20px;top:222.88px;height:7.02px;line-height:7.02px;font-size:5.4px;color:#8e8e8e;">19</div><div class="t" style="left:341.40px;top:239.43px;height:7.02px;line-height:7.02px;font-size:5.4px;color:#8e8e8e;">20</div><div class="t" style="left:357.70px;top:239.43px;height:7.02px;line-height:7.02px;font-size:5.4px;color:#8e8e8e;">21</div><div class="t" style="left:374.00px;top:239.43px;height:7.02px;line-height:7.02px;font-size:5.4px;color:#8e8e8e;">22</div><div class="t" style="left:390.30px;top:239.43px;height:7.02px;line-height:7.02px;font-size:5.4px;color:#8e8e8e;">23</div><div class="t" style="left:406.60px;top:239.43px;height:7.02px;line-height:7.02px;font-size:5.4px;color:#8e8e8e;">24</div><div class="t" style="left:422.90px;top:239.43px;height:7.02px;line-height:7.02px;font-size:5.4px;color:#8e8e8e;">25</div><div class="t" style="left:439.20px;top:239.43px;height:7.02px;line-height:7.02px;font-size:5.4px;color:#8e8e8e;">26</div><div class="t" style="left:341.40px;top:255.98px;height:7.02px;line-height:7.02px;font-size:5.4px;color:#8e8e8e;">27</div><div class="t" style="left:357.70px;top:255.98px;height:7.02px;line-height:7.02px;font-size:5.4px;color:#8e8e8e;">28</div><div class="t" style="left:374.00px;top:255.98px;height:7.02px;line-height:7.02px;font-size:5.4px;color:#8e8e8e;">29</div><div class="t" style="left:390.30px;top:255.98px;height:7.02px;line-height:7.02px;font-size:5.4px;color:#3a9a3a;font-weight:700;text-decoration:underline;text-decoration-thickness:0.6px;text-underline-offset:0.8px;">30</div><div class="t" style="left:501.81px;top:157.21px;height:10.66px;line-height:10.66px;font-size:8.2px;color:#1d1d1d;font-weight:700;transform:scaleX(0.9400);transform-origin:0 50%;">Oct</div><div class="t" style="left:516.66px;top:157.21px;height:10.66px;line-height:10.66px;font-size:8.2px;color:#b4b4b4;transform:scaleX(0.9500);transform-origin:0 50%;">2020</div><div class="t" style="left:464.96px;top:176.10px;height:8.58px;line-height:8.58px;font-size:6.6px;color:#3a3a3a;-webkit-text-stroke:0.18px currentColor;">Su</div><div class="t" style="left:480.72px;top:176.10px;height:8.58px;line-height:8.58px;font-size:6.6px;color:#3a3a3a;-webkit-text-stroke:0.18px currentColor;">Mo</div><div class="t" style="left:497.87px;top:176.10px;height:8.58px;line-height:8.58px;font-size:6.6px;color:#3a3a3a;-webkit-text-stroke:0.18px currentColor;">Tu</div><div class="t" style="left:513.01px;top:176.10px;height:8.58px;line-height:8.58px;font-size:6.6px;color:#3a3a3a;-webkit-text-stroke:0.18px currentColor;">We</div><div class="t" style="left:530.35px;top:176.10px;height:8.58px;line-height:8.58px;font-size:6.6px;color:#3a3a3a;-webkit-text-stroke:0.18px currentColor;">Th</div><div class="t" style="left:547.39px;top:176.10px;height:8.58px;line-height:8.58px;font-size:6.6px;color:#3a3a3a;-webkit-text-stroke:0.18px currentColor;">Fr</div><div class="t" style="left:562.76px;top:176.10px;height:8.58px;line-height:8.58px;font-size:6.6px;color:#3a3a3a;-webkit-text-stroke:0.18px currentColor;">Sa</div><div style="position:absolute;left:527.80px;top:188.00px;width:28.10px;height:9.60px;background:#d5ead3;border-radius:0px 4.8px 4.8px 0px;"></div><div style="position:absolute;left:560.40px;top:188.00px;width:12.40px;height:9.60px;background:#e4e4e4;border-radius:4.8px 0px 0px 4.8px;"></div><div style="position:absolute;left:463.20px;top:204.55px;width:76.40px;height:9.60px;background:#e4e4e4;border-radius:0px 4.8px 4.8px 0px;"></div><div style="position:absolute;left:544.10px;top:204.55px;width:28.10px;height:9.60px;background:#d7e7fb;border-radius:4.8px 0px 0px 4.8px;"></div><div style="position:absolute;left:462.60px;top:221.10px;width:110.20px;height:9.60px;background:#d7e7fb;border-radius:0px 0px 0px 0px;"></div><div style="position:absolute;left:463.20px;top:237.65px;width:109.60px;height:9.60px;background:#d7e7fb;border-radius:0px 0px 0px 0px;"></div><div style="position:absolute;left:463.20px;top:254.20px;width:109.00px;height:9.60px;background:#d7e7fb;border-radius:0px 0px 0px 0px;"></div><div class="t" style="left:532.40px;top:189.78px;height:7.02px;line-height:7.02px;font-size:5.4px;color:#2f7d2f;-webkit-text-stroke:0.18px currentColor;">1</div><div class="t" style="left:548.70px;top:189.78px;height:7.02px;line-height:7.02px;font-size:5.4px;color:#2f7d2f;-webkit-text-stroke:0.18px currentColor;">2</div><div class="t" style="left:565.00px;top:189.78px;height:7.02px;line-height:7.02px;font-size:5.4px;color:#8e8e8e;">3</div><div class="t" style="left:467.20px;top:206.33px;height:7.02px;line-height:7.02px;font-size:5.4px;color:#8e8e8e;">4</div><div class="t" style="left:483.50px;top:206.33px;height:7.02px;line-height:7.02px;font-size:5.4px;color:#8e8e8e;">5</div><div class="t" style="left:499.80px;top:206.33px;height:7.02px;line-height:7.02px;font-size:5.4px;color:#8e8e8e;">6</div><div class="t" style="left:516.10px;top:206.33px;height:7.02px;line-height:7.02px;font-size:5.4px;color:#8e8e8e;">7</div><div class="t" style="left:532.40px;top:206.33px;height:7.02px;line-height:7.02px;font-size:5.4px;color:#8e8e8e;">8</div><div class="t" style="left:548.70px;top:206.33px;height:7.02px;line-height:7.02px;font-size:5.4px;color:#2b5eb3;font-weight:700;text-decoration:underline;text-decoration-thickness:0.6px;text-underline-offset:0.8px;">9</div><div class="t" style="left:563.50px;top:206.33px;height:7.02px;line-height:7.02px;font-size:5.4px;color:#2b5eb3;font-weight:700;text-decoration:underline;text-decoration-thickness:0.6px;text-underline-offset:0.8px;">10</div><div class="t" style="left:465.85px;top:222.88px;height:7.02px;line-height:7.02px;font-size:5.4px;color:#2b5eb3;font-weight:700;text-decoration:underline;text-decoration-thickness:0.6px;text-underline-offset:0.8px;">11</div><div class="t" style="left:482.00px;top:222.88px;height:7.02px;line-height:7.02px;font-size:5.4px;color:#2b5eb3;font-weight:700;text-decoration:underline;text-decoration-thickness:0.6px;text-underline-offset:0.8px;">12</div><div class="t" style="left:498.30px;top:222.88px;height:7.02px;line-height:7.02px;font-size:5.4px;color:#2b5eb3;font-weight:700;text-decoration:underline;text-decoration-thickness:0.6px;text-underline-offset:0.8px;">13</div><div class="t" style="left:514.60px;top:222.88px;height:7.02px;line-height:7.02px;font-size:5.4px;color:#2b5eb3;font-weight:700;text-decoration:underline;text-decoration-thickness:0.6px;text-underline-offset:0.8px;">14</div><div class="t" style="left:530.90px;top:222.88px;height:7.02px;line-height:7.02px;font-size:5.4px;color:#2b5eb3;font-weight:700;text-decoration:underline;text-decoration-thickness:0.6px;text-underline-offset:0.8px;">15</div><div class="t" style="left:547.20px;top:222.88px;height:7.02px;line-height:7.02px;font-size:5.4px;color:#2b5eb3;font-weight:700;text-decoration:underline;text-decoration-thickness:0.6px;text-underline-offset:0.8px;">16</div><div class="t" style="left:563.50px;top:222.88px;height:7.02px;line-height:7.02px;font-size:5.4px;color:#2b5eb3;font-weight:700;text-decoration:underline;text-decoration-thickness:0.6px;text-underline-offset:0.8px;">17</div><div class="t" style="left:465.70px;top:239.43px;height:7.02px;line-height:7.02px;font-size:5.4px;color:#2b5eb3;font-weight:700;text-decoration:underline;text-decoration-thickness:0.6px;text-underline-offset:0.8px;">18</div><div class="t" style="left:482.00px;top:239.43px;height:7.02px;line-height:7.02px;font-size:5.4px;color:#2b5eb3;font-weight:700;text-decoration:underline;text-decoration-thickness:0.6px;text-underline-offset:0.8px;">19</div><div class="t" style="left:498.30px;top:239.43px;height:7.02px;line-height:7.02px;font-size:5.4px;color:#2b5eb3;font-weight:700;text-decoration:underline;text-decoration-thickness:0.6px;text-underline-offset:0.8px;">20</div><div class="t" style="left:514.60px;top:239.43px;height:7.02px;line-height:7.02px;font-size:5.4px;color:#2b5eb3;font-weight:700;text-decoration:underline;text-decoration-thickness:0.6px;text-underline-offset:0.8px;">21</div><div class="t" style="left:530.90px;top:239.43px;height:7.02px;line-height:7.02px;font-size:5.4px;color:#2b5eb3;font-weight:700;text-decoration:underline;text-decoration-thickness:0.6px;text-underline-offset:0.8px;">22</div><div class="t" style="left:547.20px;top:239.43px;height:7.02px;line-height:7.02px;font-size:5.4px;color:#2b5eb3;font-weight:700;text-decoration:underline;text-decoration-thickness:0.6px;text-underline-offset:0.8px;">23</div><div class="t" style="left:563.50px;top:239.43px;height:7.02px;line-height:7.02px;font-size:5.4px;color:#2b5eb3;font-weight:700;text-decoration:underline;text-decoration-thickness:0.6px;text-underline-offset:0.8px;">24</div><div class="t" style="left:465.70px;top:255.98px;height:7.02px;line-height:7.02px;font-size:5.4px;color:#2b5eb3;font-weight:700;text-decoration:underline;text-decoration-thickness:0.6px;text-underline-offset:0.8px;">25</div><div class="t" style="left:482.00px;top:255.98px;height:7.02px;line-height:7.02px;font-size:5.4px;color:#2b5eb3;font-weight:700;text-decoration:underline;text-decoration-thickness:0.6px;text-underline-offset:0.8px;">26</div><div class="t" style="left:498.30px;top:255.98px;height:7.02px;line-height:7.02px;font-size:5.4px;color:#2b5eb3;font-weight:700;text-decoration:underline;text-decoration-thickness:0.6px;text-underline-offset:0.8px;">27</div><div class="t" style="left:514.60px;top:255.98px;height:7.02px;line-height:7.02px;font-size:5.4px;color:#2b5eb3;font-weight:700;text-decoration:underline;text-decoration-thickness:0.6px;text-underline-offset:0.8px;">28</div><div class="t" style="left:530.90px;top:255.98px;height:7.02px;line-height:7.02px;font-size:5.4px;color:#2b5eb3;font-weight:700;text-decoration:underline;text-decoration-thickness:0.6px;text-underline-offset:0.8px;">29</div><div class="t" style="left:547.20px;top:255.98px;height:7.02px;line-height:7.02px;font-size:5.4px;color:#2b5eb3;font-weight:700;text-decoration:underline;text-decoration-thickness:0.6px;text-underline-offset:0.8px;">30</div><div class="t" style="left:563.50px;top:255.98px;height:7.02px;line-height:7.02px;font-size:5.4px;color:#2b5eb3;font-weight:700;text-decoration:underline;text-decoration-thickness:0.6px;text-underline-offset:0.8px;">31</div><svg style="left:194.5px;top:214.3px" width="9" height="12" viewBox="0 0 9 12"><path d="M6.8 1.2 L1.8 6 L6.8 10.8" fill="none" stroke="#111" stroke-width="1.9"/></svg><svg style="left:580.5px;top:214.3px" width="9" height="12" viewBox="0 0 9 12"><path d="M2.2 1.2 L7.2 6 L2.2 10.8" fill="none" stroke="#111" stroke-width="1.9"/></svg><div style="position:absolute;left:427.30px;top:293.10px;width:8.70px;height:1.20px;background:#2b5eb3;border-radius:0.6px;"></div><div class="t" style="left:440.00px;top:290.90px;height:6.5px;line-height:6.5px;font-size:5px;color:#b0b0b0;letter-spacing:0.298px;">Available/Open</div><div style="position:absolute;left:488.10px;top:293.10px;width:8.70px;height:1.20px;background:#3a9a3a;border-radius:0.6px;"></div><div class="t" style="left:500.70px;top:290.90px;height:6.5px;line-height:6.5px;font-size:5px;color:#b0b0b0;letter-spacing:0.338px;">Home Time</div><div style="position:absolute;left:543.40px;top:293.10px;width:8.60px;height:1.20px;background:#666;border-radius:0.6px;"></div><div class="t" style="left:556.00px;top:290.90px;height:6.5px;line-height:6.5px;font-size:5px;color:#b0b0b0;letter-spacing:0.279px;">Working</div><div class="card" style="position:absolute;left:188.70px;top:318.00px;width:408.60px;height:66.30px;background:#fff;"></div><div style="position:absolute;left:188.70px;top:318.00px;width:408.60px;height:19.50px;background:#fafafa;border-bottom:1px solid #dedede;box-sizing:border-box;box-shadow:0 1px 1px rgba(0,0,0,.07);"></div><div class="t" style="left:198.70px;top:324.16px;height:9.62px;line-height:9.62px;font-size:7.4px;color:#222;transform:scaleX(0.9792);transform-origin:0 50%;-webkit-text-stroke:0.32px currentColor;">Existing Requests</div><svg style="left:581.90px;top:326.00px" width="9" height="6" viewBox="0 0 9 6"><path d="M1 1.2 L4.5 4.6 L8 1.2" fill="none" stroke="#707070" stroke-width="0.95"/></svg><div class="t" style="left:207.85px;top:352.33px;height:8.06px;line-height:8.06px;font-size:6.2px;color:#808080;transform:scaleX(0.9926);transform-origin:6.55px 50%;">Date</div><div class="t" style="left:247.49px;top:352.33px;height:8.06px;line-height:8.06px;font-size:6.2px;color:#808080;transform:scaleX(0.9872);transform-origin:16.71px 50%;">Return Date</div><div class="t" style="left:298.89px;top:352.33px;height:8.06px;line-height:8.06px;font-size:6.2px;color:#808080;letter-spacing:0.074px;">Division</div><div class="t" style="left:338.60px;top:352.33px;height:8.06px;line-height:8.06px;font-size:6.2px;color:#808080;letter-spacing:0.070px;">Location</div><div class="t" style="left:201.07px;top:364.10px;height:8.58px;line-height:8.58px;font-size:6.6px;color:#222;letter-spacing:0.139px;">07/31/20</div><div class="t" style="left:250.87px;top:364.10px;height:8.58px;line-height:8.58px;font-size:6.6px;color:#222;letter-spacing:0.139px;">07/31/20</div><div class="t" style="left:304.37px;top:364.10px;height:8.58px;line-height:8.58px;font-size:6.6px;color:#222;transform:scaleX(0.9153);transform-origin:5.63px 50%;">Van</div><div class="t" style="left:338.60px;top:364.10px;height:8.58px;line-height:8.58px;font-size:6.6px;color:#222;transform:scaleX(0.9489);transform-origin:0 50%;">Pheonix, Arizona</div><div class="card" style="position:absolute;left:188.70px;top:390.20px;width:408.60px;height:107.70px;background:#fff;"></div><div style="position:absolute;left:188.70px;top:390.20px;width:408.60px;height:18.90px;background:#fafafa;border-bottom:1px solid #dedede;box-sizing:border-box;box-shadow:0 1px 1px rgba(0,0,0,.07);"></div><div class="t" style="left:198.60px;top:397.26px;height:9.62px;line-height:9.62px;font-size:7.4px;color:#222;letter-spacing:0.005px;-webkit-text-stroke:0.32px currentColor;">Home Time History</div><svg style="left:581.90px;top:397.40px" width="9" height="6" viewBox="0 0 9 6"><path d="M1 1.2 L4.5 4.6 L8 1.2" fill="none" stroke="#707070" stroke-width="0.95"/></svg><div class="t" style="left:207.85px;top:420.83px;height:8.06px;line-height:8.06px;font-size:6.2px;color:#808080;transform:scaleX(0.9926);transform-origin:6.55px 50%;">Date</div><div class="t" style="left:247.49px;top:420.83px;height:8.06px;line-height:8.06px;font-size:6.2px;color:#808080;transform:scaleX(0.9872);transform-origin:16.71px 50%;">Return Date</div><div class="t" style="left:298.89px;top:420.83px;height:8.06px;line-height:8.06px;font-size:6.2px;color:#808080;letter-spacing:0.074px;">Division</div><div class="t" style="left:338.60px;top:420.83px;height:8.06px;line-height:8.06px;font-size:6.2px;color:#808080;letter-spacing:0.070px;">Location</div><div class="t" style="left:201.07px;top:432.80px;height:8.58px;line-height:8.58px;font-size:6.6px;color:#222;letter-spacing:0.139px;">07/30/20</div><div class="t" style="left:250.87px;top:432.80px;height:8.58px;line-height:8.58px;font-size:6.6px;color:#222;letter-spacing:0.139px;">07/31/20</div><div class="t" style="left:304.37px;top:432.80px;height:8.58px;line-height:8.58px;font-size:6.6px;color:#222;transform:scaleX(0.9153);transform-origin:5.63px 50%;">Van</div><div class="t" style="left:338.60px;top:432.80px;height:8.58px;line-height:8.58px;font-size:6.6px;color:#222;transform:scaleX(0.9489);transform-origin:0 50%;">Pheonix, Arizona</div><div class="t" style="left:404.00px;top:432.80px;height:8.58px;line-height:8.58px;font-size:6.6px;color:#222;transform:scaleX(0.9416);transform-origin:0 50%;">Notes . . . . .</div><div class="t" style="left:201.07px;top:444.90px;height:8.58px;line-height:8.58px;font-size:6.6px;color:#222;letter-spacing:0.139px;">07/02/20</div><div class="t" style="left:250.87px;top:444.90px;height:8.58px;line-height:8.58px;font-size:6.6px;color:#222;letter-spacing:0.139px;">07/04/20</div><div class="t" style="left:304.37px;top:444.90px;height:8.58px;line-height:8.58px;font-size:6.6px;color:#222;transform:scaleX(0.9153);transform-origin:5.63px 50%;">Van</div><div class="t" style="left:338.60px;top:444.90px;height:8.58px;line-height:8.58px;font-size:6.6px;color:#222;transform:scaleX(0.9489);transform-origin:0 50%;">Pheonix, Arizona</div><div class="t" style="left:404.00px;top:444.90px;height:8.58px;line-height:8.58px;font-size:6.6px;color:#222;transform:scaleX(0.9416);transform-origin:0 50%;">Notes . . . . .</div><div class="t" style="left:201.07px;top:457.00px;height:8.58px;line-height:8.58px;font-size:6.6px;color:#222;letter-spacing:0.139px;">06/17/20</div><div class="t" style="left:250.87px;top:457.00px;height:8.58px;line-height:8.58px;font-size:6.6px;color:#222;letter-spacing:0.139px;">06/19/20</div><div class="t" style="left:304.37px;top:457.00px;height:8.58px;line-height:8.58px;font-size:6.6px;color:#222;transform:scaleX(0.9153);transform-origin:5.63px 50%;">Van</div><div class="t" style="left:338.60px;top:457.00px;height:8.58px;line-height:8.58px;font-size:6.6px;color:#222;transform:scaleX(0.9489);transform-origin:0 50%;">Pheonix, Arizona</div><div class="t" style="left:404.00px;top:457.00px;height:8.58px;line-height:8.58px;font-size:6.6px;color:#222;transform:scaleX(0.9416);transform-origin:0 50%;">Notes . . . . .</div><div class="t" style="left:201.07px;top:469.10px;height:8.58px;line-height:8.58px;font-size:6.6px;color:#222;letter-spacing:0.139px;">06/01/20</div><div class="t" style="left:250.87px;top:469.10px;height:8.58px;line-height:8.58px;font-size:6.6px;color:#222;letter-spacing:0.139px;">06/03/20</div><div class="t" style="left:304.37px;top:469.10px;height:8.58px;line-height:8.58px;font-size:6.6px;color:#222;transform:scaleX(0.9153);transform-origin:5.63px 50%;">Van</div><div class="t" style="left:338.60px;top:469.10px;height:8.58px;line-height:8.58px;font-size:6.6px;color:#222;transform:scaleX(0.9489);transform-origin:0 50%;">Pheonix, Arizona</div><div class="t" style="left:404.00px;top:469.10px;height:8.58px;line-height:8.58px;font-size:6.6px;color:#222;transform:scaleX(0.9416);transform-origin:0 50%;">Notes . . . . .</div><div class="t" style="left:201.07px;top:481.20px;height:8.58px;line-height:8.58px;font-size:6.6px;color:#222;letter-spacing:0.139px;">05/24/20</div><div class="t" style="left:250.87px;top:481.20px;height:8.58px;line-height:8.58px;font-size:6.6px;color:#222;letter-spacing:0.139px;">05/26/20</div><div class="t" style="left:304.37px;top:481.20px;height:8.58px;line-height:8.58px;font-size:6.6px;color:#222;transform:scaleX(0.9153);transform-origin:5.63px 50%;">Van</div><div class="t" style="left:338.60px;top:481.20px;height:8.58px;line-height:8.58px;font-size:6.6px;color:#222;transform:scaleX(0.9489);transform-origin:0 50%;">Pheonix, Arizona</div><div class="t" style="left:404.00px;top:481.20px;height:8.58px;line-height:8.58px;font-size:6.6px;color:#222;transform:scaleX(0.9416);transform-origin:0 50%;">Notes . . . . .</div><div class="card" style="position:absolute;left:603.00px;top:73.70px;width:274.50px;height:168.00px;background:#fff;"></div><div style="position:absolute;left:603.00px;top:73.70px;width:274.50px;height:35.30px;background:#1a3864;"></div><div class="t" style="left:616.70px;top:86.55px;height:11.96px;line-height:11.96px;font-size:9.2px;color:#fff;transform:scaleX(0.9707);transform-origin:0 50%;-webkit-text-stroke:0.32px currentColor;">Home Time Request</div><svg style="left:856.4px;top:87.2px" width="9" height="9" viewBox="0 0 9 9"><path d="M1.2 1.2 H6.3 L7.8 2.7 V7.8 H1.2 Z" fill="none" stroke="#dfe6f0" stroke-width="0.7"/><rect x="2.7" y="1.4" width="3" height="1.6" fill="none" stroke="#dfe6f0" stroke-width="0.5"/><circle cx="4.5" cy="5.4" r="1.1" fill="none" stroke="#dfe6f0" stroke-width="0.6"/></svg><div style="position:absolute;left:616.70px;top:123.90px;width:115.30px;height:25.10px;background:#eeeeee;border-bottom:1px solid #a2a2a2;box-sizing:border-box;border-radius:1.5px 1.5px 0 0;"></div><div style="position:absolute;left:749.70px;top:123.90px;width:116.00px;height:25.10px;background:#eeeeee;border-bottom:1px solid #a2a2a2;box-sizing:border-box;border-radius:1.5px 1.5px 0 0;"></div><div style="position:absolute;left:616.70px;top:165.40px;width:249.00px;height:24.40px;background:#eeeeee;border-bottom:1px solid #a2a2a2;box-sizing:border-box;border-radius:1.5px 1.5px 0 0;"></div><div class="t" style="left:623.60px;top:127.90px;height:6.5px;line-height:6.5px;font-size:5px;color:#ababab;letter-spacing:0.301px;">Home Date</div><div class="t" style="left:623.60px;top:133.89px;height:10.01px;line-height:10.01px;font-size:7.7px;color:#222;letter-spacing:0.066px;">09/07/20</div><div class="t" style="left:663.40px;top:133.89px;height:10.01px;line-height:10.01px;font-size:7.7px;color:#222;transform:scaleX(0.9341);transform-origin:0 50%;">12:00</div><svg style="left:720.00px;top:132.40px" width="8" height="8" viewBox="0 0 8 8"><rect x="1" y="1.6" width="6" height="5.6" rx="0.8" fill="none" stroke="#8a8a8a" stroke-width="0.7"/><path d="M2.5 0.6 V2 M5.5 0.6 V2" stroke="#8a8a8a" stroke-width="0.7"/></svg><div class="t" style="left:756.60px;top:127.90px;height:6.5px;line-height:6.5px;font-size:5px;color:#ababab;letter-spacing:0.258px;">Return Date</div><div class="t" style="left:756.60px;top:133.89px;height:10.01px;line-height:10.01px;font-size:7.7px;color:#222;letter-spacing:0.066px;">09/10/20</div><div class="t" style="left:796.10px;top:133.89px;height:10.01px;line-height:10.01px;font-size:7.7px;color:#222;transform:scaleX(0.9341);transform-origin:0 50%;">06:00</div><svg style="left:850.30px;top:132.40px" width="8" height="8" viewBox="0 0 8 8"><rect x="1" y="1.6" width="6" height="5.6" rx="0.8" fill="none" stroke="#8a8a8a" stroke-width="0.7"/><path d="M2.5 0.6 V2 M5.5 0.6 V2" stroke="#8a8a8a" stroke-width="0.7"/></svg><div class="t" style="left:623.60px;top:169.00px;height:6.5px;line-height:6.5px;font-size:5px;color:#ababab;letter-spacing:0.403px;">Comments</div><div class="t" style="left:623.60px;top:175.04px;height:9.88px;line-height:9.88px;font-size:7.6px;color:#222;transform:scaleX(0.9811);transform-origin:0 50%;">Information from Approver</div><div style="position:absolute;left:613.90px;top:216.00px;width:40.10px;height:16.00px;background:#2c5fb4;border-radius:1.5px;box-shadow:0 1px 1.5px rgba(0,0,0,.3);"></div><div class="t" style="left:621.61px;top:220.75px;height:7.54px;line-height:7.54px;font-size:5.8px;color:#fff;font-weight:700;letter-spacing:0.511px;">SUBMIT</div><div class="t" style="left:666.90px;top:220.75px;height:7.54px;line-height:7.54px;font-size:5.8px;color:#2c5fb4;font-weight:700;letter-spacing:0.422px;">CANCEL</div><svg style="left:603.4px;top:245.2px" width="274.6" height="253.3" viewBox="0.4 0.2 274.6 253.3"><defs><clipPath id="mcB"><rect width="275" height="253.5"/></clipPath><filter id="blB" x="0" y="0" width="275" height="253.5" filterUnits="userSpaceOnUse"><feGaussianBlur in="SourceGraphic" stdDeviation="1.3" result="b"/><feTurbulence type="fractalNoise" baseFrequency="0.16" numOctaves="2" seed="7" result="n"/><feColorMatrix in="n" type="matrix" values="0 0 0 0 0  0 0 0 0 0  0 0 0 0 0  7 0 0 0 -2.6" result="m"/><feGaussianBlur in="m" stdDeviation="0.5" result="m2"/><feComposite in="b" in2="m2" operator="in"/></filter><filter id="bsB" x="-20%" y="-20%" width="140%" height="140%"><feGaussianBlur stdDeviation="4"/></filter></defs><g clip-path="url(#mcB)"><rect width="275" height="253.5" fill="#f3f0e8"/><g filter="url(#bsB)"><path d="M180 -10 L290 -10 L290 270 L215 270 L200 200 L185 150 L190 90 Z" fill="#ecefe3"/><path d="M205 110 L290 110 L290 270 L215 270 Z" fill="#e8ecde"/><path d="M70 215 L100 210 L105 262 L68 262 Z" fill="#e2e6d6"/></g><g filter="url(#blB)" fill="#c9e3bf" opacity="0.85"><path d="M92.0 12.6 C94.0 9.8 106.2 9.0 111.4 10.2 C116.7 11.4 119.4 17.9 123.6 19.9 C127.9 21.9 133.8 19.5 137.0 22.3 C140.3 25.2 142.5 31.3 143.1 37.0 C143.7 42.6 141.7 49.5 140.7 56.4 C139.6 63.3 139.8 75.1 137.0 78.4 C134.2 81.6 127.9 77.1 123.6 75.9 C119.4 74.7 115.1 73.9 111.4 71.0 C107.8 68.2 105.4 59.3 101.7 58.9 C98.0 58.5 93.2 68.2 89.5 68.6 C85.9 69.0 81.0 65.4 79.8 61.3 C78.6 57.2 79.8 47.9 82.2 44.3 C84.7 40.6 91.6 42.2 94.4 39.4 C97.2 36.6 99.7 31.7 99.3 27.2 C98.9 22.8 89.9 15.4 92.0 12.6 Z"/><path d="M123.6 78.4 C125.6 74.7 133.8 75.5 137.0 78.4 C140.3 81.2 143.7 90.5 143.1 95.4 C142.5 100.3 136.4 106.8 133.4 107.6 C130.3 108.4 126.5 105.1 124.8 100.3 C123.2 95.4 121.6 82.0 123.6 78.4 Z"/><path d="M33.5 12.6 C34.7 10.4 40.8 12.2 42.0 15.0 C43.3 17.9 42.0 27.4 40.8 29.7 C39.6 31.9 36.0 31.3 34.7 28.4 C33.5 25.6 32.3 14.8 33.5 12.6 Z"/><path d="M23.8 44.3 C26.6 40.2 34.5 37.8 38.4 39.4 C42.2 41.0 46.1 48.3 46.9 54.0 C47.7 59.7 45.9 69.8 43.3 73.5 C40.6 77.1 34.7 77.5 31.1 75.9 C27.4 74.3 22.6 69.0 21.3 63.7 C20.1 58.5 20.9 48.3 23.8 44.3 Z"/><path d="M54.2 47.9 C56.2 44.5 67.6 43.7 70.0 46.7 C72.5 49.7 70.9 62.7 68.8 66.2 C66.8 69.6 60.3 70.4 57.9 67.4 C55.4 64.4 52.2 51.4 54.2 47.9 Z"/><path d="M56.7 34.5 C58.1 32.7 65.0 32.5 66.4 34.5 C67.8 36.6 66.6 44.9 65.2 46.7 C63.8 48.5 59.3 47.5 57.9 45.5 C56.5 43.5 55.2 36.3 56.7 34.5 Z"/><path d="M70.0 54.0 C71.1 51.0 75.9 49.9 77.4 52.8 C78.8 55.6 79.6 68.0 78.6 71.0 C77.6 74.1 72.7 73.9 71.3 71.0 C69.8 68.2 69.0 57.0 70.0 54.0 Z"/><path d="M0.7 80.8 C2.1 77.3 8.6 78.8 10.4 82.0 C12.2 85.2 13.0 96.8 11.6 100.3 C10.2 103.7 3.7 105.9 1.9 102.7 C0.0 99.5 -0.8 84.2 0.7 80.8 Z"/><path d="M21.3 85.7 C23.6 83.6 33.7 84.4 36.0 86.9 C38.2 89.3 37.0 98.2 34.7 100.3 C32.5 102.3 24.8 101.5 22.6 99.0 C20.3 96.6 19.1 87.7 21.3 85.7 Z"/><path d="M28.7 107.6 C30.9 105.5 41.6 109.4 44.5 112.4 C47.3 115.5 47.9 123.8 45.7 125.8 C43.5 127.9 33.9 127.7 31.1 124.6 C28.2 121.6 26.4 109.6 28.7 107.6 Z"/><path d="M87.1 113.7 C90.9 111.2 107.6 110.2 111.4 112.4 C115.3 114.7 114.1 124.6 110.2 127.0 C106.4 129.5 92.2 129.3 88.3 127.0 C84.5 124.8 83.2 116.1 87.1 113.7 Z"/><path d="M0.7 0.9 C2.5 0.2 9.8 0.2 11.6 0.9 C13.4 1.7 13.4 4.6 11.6 5.3 C9.8 6.0 2.5 6.0 0.7 5.3 C-1.2 4.6 -1.2 1.7 0.7 0.9 Z"/><path d="M48.1 2.9 C52.4 0.8 70.2 -0.1 74.9 2.4 C79.6 4.8 78.6 14.6 76.1 17.5 C73.7 20.4 64.8 20.3 60.3 19.9 C55.8 19.5 51.4 17.9 49.3 15.0 C47.3 12.2 43.9 5.0 48.1 2.9 Z"/><path d="M31.1 132.3 C33.7 130.7 46.5 131.5 49.3 133.5 C52.2 135.6 50.8 142.9 48.1 144.5 C45.5 146.1 36.4 145.3 33.5 143.3 C30.7 141.2 28.5 133.9 31.1 132.3 Z"/><path d="M54.2 131.1 C58.5 130.3 71.5 130.3 74.9 134.7 C78.4 139.2 77.4 154.6 74.9 157.9 C72.5 161.1 64.6 157.3 60.3 154.2 C56.0 151.2 50.4 143.5 49.3 139.6 C48.3 135.8 50.0 131.9 54.2 131.1 Z"/><path d="M78.6 129.9 C81.0 125.8 92.6 126.6 95.6 131.1 C98.7 135.6 99.3 152.6 96.8 156.7 C94.4 160.7 84.0 159.9 81.0 155.4 C78.0 151.0 76.1 133.9 78.6 129.9 Z"/><path d="M95.6 125.0 C98.0 122.8 109.0 122.6 111.4 125.0 C113.9 127.4 112.7 137.4 110.2 139.6 C107.8 141.8 99.3 140.8 96.8 138.4 C94.4 136.0 93.2 127.2 95.6 125.0 Z"/><path d="M111.4 142.0 C114.5 139.8 128.9 138.6 132.1 140.8 C135.4 143.1 134.0 153.2 130.9 155.4 C127.9 157.7 117.1 156.5 113.9 154.2 C110.6 152.0 108.4 144.3 111.4 142.0 Z"/><path d="M0.7 164.0 C2.3 162.5 8.6 163.3 10.4 165.2 C12.2 167.0 13.2 173.5 11.6 174.9 C10.0 176.3 2.5 175.5 0.7 173.7 C-1.2 171.9 -1.0 165.4 0.7 164.0 Z"/><path d="M81.0 198.0 C82.2 196.0 87.9 196.0 89.5 198.0 C91.1 200.1 92.0 208.2 90.7 210.2 C89.5 212.2 83.8 212.2 82.2 210.2 C80.6 208.2 79.8 200.1 81.0 198.0 Z"/><path d="M83.4 222.4 C85.9 221.0 96.8 222.0 99.3 223.6 C101.7 225.2 100.5 230.7 98.0 232.1 C95.6 233.6 87.1 233.8 84.7 232.1 C82.2 230.5 81.0 223.8 83.4 222.4 Z"/><path d="M23.8 216.3 C24.8 215.3 29.1 216.1 29.9 217.5 C30.7 218.9 29.7 223.8 28.7 224.8 C27.6 225.8 24.6 225.0 23.8 223.6 C23.0 222.2 22.8 217.3 23.8 216.3 Z"/><path d="M139.4 0.9 C141.1 0.2 147.6 0.2 149.2 0.9 C150.8 1.7 150.8 4.6 149.2 5.3 C147.6 6.0 141.1 6.0 139.4 5.3 C137.8 4.6 137.8 1.7 139.4 0.9 Z"/><path d="M150.4 0.9 C151.8 0.2 157.5 0.2 158.9 0.9 C160.3 1.7 160.3 4.6 158.9 5.3 C157.5 6.0 151.8 6.0 150.4 5.3 C149.0 4.6 149.0 1.7 150.4 0.9 Z"/><path d="M134.6 27.2 C135.5 19.1 138.9 21.1 139.9 29.7 C140.9 38.2 141.5 70.2 140.7 78.4 C139.8 86.5 135.6 86.9 134.6 78.4 C133.6 69.8 133.7 35.3 134.6 27.2 Z"/><path d="M166.7 84.4 C168.9 83.6 177.5 83.6 179.6 84.4 C181.8 85.2 181.8 88.5 179.6 89.3 C177.5 90.1 168.9 90.1 166.7 89.3 C164.6 88.5 164.6 85.2 166.7 84.4 Z"/><path d="M212.5 97.8 C213.5 97.0 217.6 97.0 218.6 97.8 C219.6 98.6 219.6 101.9 218.6 102.7 C217.6 103.5 213.5 103.5 212.5 102.7 C211.5 101.9 211.5 98.6 212.5 97.8 Z"/><path d="M137.0 159.1 C137.8 158.1 141.1 159.1 141.9 160.3 C142.6 161.5 142.2 165.4 141.4 166.4 C140.6 167.4 137.7 167.6 137.0 166.4 C136.3 165.2 136.2 160.1 137.0 159.1 Z"/><path d="M146.7 207.8 C147.3 206.2 152.8 208.0 155.3 210.2 C157.7 212.5 162.0 219.6 161.3 221.2 C160.7 222.8 154.0 222.2 151.6 220.0 C149.2 217.7 146.1 209.4 146.7 207.8 Z"/><path d="M169.9 213.9 C170.5 211.6 173.9 212.5 177.2 216.3 C180.4 220.2 188.3 233.1 189.3 237.0 C190.4 240.9 185.9 240.7 183.3 239.4 C180.6 238.2 175.8 234.0 173.5 229.7 C171.3 225.4 169.3 216.1 169.9 213.9 Z"/></g><g filter="url(#bsB)"><path d="M70.0 217.5 C73.3 211.0 89.5 209.4 94.4 215.1 C99.3 220.8 102.5 245.1 99.3 251.6 C96.0 258.1 79.8 259.7 74.9 254.0 C70.0 248.4 66.8 224.0 70.0 217.5 Z" fill="#e5e8da"/></g><path d="M-3.1 174.5 C-2.6 168.9 -1.0 174.6 0.2 174.9 C1.5 175.1 2.9 175.3 4.4 176.0 C5.8 176.7 7.6 177.8 9.0 179.0 C10.4 180.2 11.8 181.3 12.8 183.1 C13.8 184.9 14.3 187.5 15.2 189.6 C16.2 191.8 17.1 193.6 18.4 196.2 C19.7 198.8 21.6 202.4 23.1 205.2 C24.6 208.0 25.6 210.2 27.2 213.1 C28.8 215.9 30.8 219.8 32.5 222.4 C34.1 225.1 35.6 226.9 37.1 229.0 C38.7 231.0 39.8 232.3 41.8 234.6 C43.8 236.9 46.8 240.0 49.3 242.6 C51.8 245.2 54.6 247.7 56.8 250.1 C59.0 252.5 66.6 255.9 62.4 257.1 C58.2 258.2 36.9 257.5 31.5 257.1 C26.1 256.6 31.0 256.0 30.2 254.3 C29.4 252.5 28.0 249.1 26.8 246.8 C25.6 244.4 24.5 242.5 23.1 240.2 C21.7 237.9 20.1 235.2 18.4 232.7 C16.7 230.2 14.5 227.7 12.8 225.2 C11.1 222.7 9.7 219.9 8.1 217.7 C6.5 215.5 4.7 213.5 3.4 212.1 C2.1 210.7 1.3 209.9 0.2 209.3 C-0.8 208.7 -2.6 214.2 -3.1 208.4 C-3.7 202.6 -3.7 180.1 -3.1 174.5 Z" fill="#a9d5fa"/><path d="M7.4 210.8 C7.4 210.1 8.9 210.6 10.0 211.7 C11.1 212.9 13.4 216.2 13.9 217.5 C14.4 218.9 13.7 220.0 13.0 219.8 C12.3 219.5 10.5 217.5 9.6 216.0 C8.7 214.6 7.3 211.5 7.4 210.8 Z" fill="#f3f0e8"/><path d="M278.2 223.6 C277.2 218.7 274.0 225.2 272.1 226.0 C270.3 226.9 268.7 227.2 267.3 228.5 C265.8 229.8 265.1 232.1 263.6 233.8 C262.1 235.6 260.0 236.9 258.3 239.0 C256.6 241.0 254.6 243.5 253.4 246.3 C252.2 249.0 246.8 253.8 251.0 255.3 C255.1 256.8 273.7 260.5 278.2 255.3 C282.8 250.0 279.2 228.5 278.2 223.6 Z" fill="#a9d5fa"/><ellipse cx="34.3" cy="14.6" rx="0.9" ry="2.6" fill="#a9d5fa"/><ellipse cx="14.8" cy="38.2" rx="1" ry="1.8" fill="#a9d5fa"/><ellipse cx="26.2" cy="2.4" rx="1.6" ry="1" fill="#a9d5fa"/><g fill="none" stroke="#dad6ce" stroke-width="0.45"><path d="M76.6 -2.0 L76.6 76.4"/><path d="M0.7 76.4 L143.1 76.4"/><path d="M137.0 76.4 L275.8 76.4"/><path d="M181.3 -2.0 L181.3 76.4"/><path d="M166.7 76.4 L166.7 129.5"/><path d="M166.7 85.2 L212.5 85.2 L212.5 122.2 L217.4 122.7 L222.2 124.6 L224.7 128.3"/><path d="M137.0 18.0 L275.8 18.0"/><path d="M76.6 125.0 L76.6 179.1"/><path d="M166.7 125.0 L166.7 166.9 L137.0 166.9"/><path d="M0.7 125.0 L0.7 125.0"/></g><g fill="none" stroke="#f8db8c" stroke-width="1.1" stroke-linecap="round"><path d="M0.7 3.4 C3.3 3.2 11.4 2.7 16.5 2.4 C21.6 2.1 28.2 1.2 31.1 1.7 C33.9 2.1 33.1 4.7 33.5 5.3"/><path d="M33.5 -2.0 C33.5 0.4 32.9 8.6 33.5 12.6 C34.1 16.7 37.2 19.3 37.2 22.3 C37.2 25.4 34.9 28.2 33.5 30.9 C32.1 33.5 30.3 34.9 28.7 38.2 C27.0 41.4 25.6 46.5 23.8 50.3 C22.0 54.2 19.7 58.1 17.7 61.3 C15.7 64.6 14.4 67.0 11.6 69.8 C8.8 72.7 2.5 76.9 0.7 78.4"/><path d="M28.7 38.2 C31.5 38.5 40.4 39.9 45.7 39.9 C51.0 39.9 56.2 38.9 60.3 38.2 C64.4 37.5 66.8 36.3 70.0 35.7 C73.3 35.1 76.5 35.5 79.8 34.5 C83.0 33.5 85.5 31.3 89.5 29.7 C93.6 28.0 99.3 25.8 104.1 24.8 C109.0 23.8 114.5 24.0 118.7 23.6 C123.0 23.2 126.5 22.6 129.7 22.3 C132.9 22.1 136.8 22.3 138.2 22.3"/><path d="M137.0 22.3 C137.4 24.8 139.4 31.7 139.4 37.0 C139.4 42.2 137.0 48.3 137.0 54.0 C137.0 59.7 139.2 65.8 139.4 71.0 C139.6 76.3 139.2 81.2 138.2 85.7 C137.2 90.1 135.8 95.0 133.4 97.8 C130.9 100.7 126.5 100.3 123.6 102.7 C120.8 105.1 118.3 108.4 116.3 112.4 C114.3 116.5 112.3 124.6 111.4 127.0"/><path d="M33.5 112.4 C34.1 113.3 36.8 114.9 37.2 117.3 C37.6 119.7 36.2 125.4 36.0 127.0"/><path d="M33.5 1.7 C40.8 1.4 65.2 0.6 77.4 0.4 C89.5 0.3 95.6 0.9 106.6 0.9 C117.5 0.9 137.0 0.5 143.1 0.4"/><path d="M137.0 22.3 C138.8 22.6 145.1 22.3 148.0 23.6 C150.8 24.8 152.2 28.2 154.0 29.7 C155.9 31.2 152.0 32.2 158.9 32.6 C165.8 33.0 188.1 31.4 195.4 32.1 C202.7 32.7 199.1 35.3 202.7 36.5 C206.4 37.7 210.0 38.8 217.4 39.4 C224.7 40.0 238.9 40.1 246.6 39.9 C254.3 39.7 258.5 38.7 263.6 38.2 C268.7 37.6 274.8 36.8 277.0 36.5"/><path d="M141.9 -2.0 C142.1 0.4 143.3 8.6 143.1 12.6 C142.9 16.7 141.1 20.7 140.7 22.3"/><path d="M137.0 12.6 C139.4 12.2 147.1 11.8 151.6 10.2 C156.1 8.6 159.7 4.3 163.8 2.9 C167.8 1.4 173.9 1.9 176.0 1.7"/><path d="M212.5 0.9 C216.1 1.4 227.5 3.8 234.4 4.1 C241.3 4.3 246.8 2.8 253.9 2.4 C261.0 2.0 273.1 1.8 277.0 1.7"/><path d="M246.6 39.9 C247.4 41.4 250.5 45.2 251.4 49.1 C252.3 53.1 251.9 58.1 251.9 63.7 C251.9 69.4 251.5 76.3 251.4 83.2 C251.4 90.1 251.8 99.0 251.4 105.1 C251.0 111.2 249.2 115.7 249.0 119.7 C248.8 123.8 250.0 127.9 250.2 129.5"/><path d="M251.9 63.7 C253.9 62.5 260.0 59.3 263.6 56.4 C267.2 53.6 271.1 49.1 273.4 46.7 C275.6 44.3 276.4 42.6 277.0 41.8"/><path d="M251.4 100.3 C253.5 99.5 259.4 97.0 263.6 95.4 C267.9 93.8 274.8 91.3 277.0 90.5"/><path d="M183.3 109.5 C183.5 111.2 184.1 116.4 184.5 119.7 C184.9 123.1 185.5 127.9 185.7 129.5"/><path d="M249.0 107.6 C247.4 108.8 241.7 111.2 239.3 114.9 C236.8 118.5 235.2 127.0 234.4 129.5"/><path d="M137.0 99.0 C137.8 98.4 140.7 98.8 141.9 95.4 C143.1 91.9 144.5 84.4 144.3 78.4 C144.1 72.3 141.5 64.6 140.7 58.9 C139.8 53.2 139.2 48.7 139.4 44.3 C139.6 39.8 141.5 34.1 141.9 32.1"/><path d="M29.9 125.0 C30.0 127.8 29.6 137.1 30.6 141.6 C31.6 146.0 33.2 148.2 36.0 151.8 C38.7 155.4 45.1 158.7 46.9 163.2 C48.7 167.8 47.1 173.3 46.9 179.1 C46.7 184.9 45.5 191.6 45.7 198.0 C45.9 204.5 48.1 211.8 48.1 217.5 C48.1 223.2 46.5 228.5 45.7 232.1 C44.9 235.8 43.7 238.2 43.3 239.4"/><path d="M0.7 154.2 C3.3 153.8 11.5 152.6 16.5 151.8 C21.5 151.0 28.2 149.8 30.6 149.3"/><path d="M0.7 164.0 C3.3 164.6 11.8 166.0 16.5 167.6 C21.1 169.2 26.4 171.1 28.7 173.7 C30.9 176.3 28.7 180.8 29.9 183.4 C31.1 186.1 33.1 188.7 36.0 189.5 C38.8 190.3 44.7 189.5 46.9 188.3 C49.1 187.1 48.9 183.2 49.3 182.2"/><path d="M46.9 163.2 C49.6 162.9 57.7 161.4 62.7 161.5 C67.8 161.6 72.1 163.8 77.4 164.0 C82.6 164.2 89.1 163.1 94.4 162.7 C99.7 162.3 105.6 160.1 109.0 161.5 C112.4 162.9 113.7 169.6 114.6 171.3"/><path d="M30.6 141.6 C28.2 140.8 21.5 137.7 16.5 137.2 C11.5 136.6 3.3 138.2 0.7 138.4"/><path d="M109.0 125.0 C108.8 127.4 107.6 134.7 107.8 139.6 C108.0 144.5 109.1 148.9 110.2 154.2 C111.4 159.5 112.8 166.4 114.6 171.3 C116.4 176.1 118.9 179.0 121.2 183.4 C123.5 187.9 128.1 192.4 128.5 198.0 C128.9 203.7 124.8 212.7 123.6 217.5 C122.4 222.4 120.8 223.2 121.2 227.3 C121.6 231.3 125.6 237.4 126.0 241.9 C126.5 246.3 124.0 252.0 123.6 254.0"/><path d="M46.9 179.1 C50.4 179.2 64.0 176.6 67.6 179.8 C71.3 182.9 69.6 193.4 68.8 198.0 C68.0 202.7 66.0 204.9 62.7 207.8 C59.5 210.6 51.6 213.9 49.3 215.1"/><path d="M67.6 179.8 C71.3 179.8 85.1 177.6 89.5 179.8 C94.0 182.0 92.4 188.9 94.4 193.2 C96.4 197.4 97.6 202.9 101.7 205.4 C105.8 207.8 112.7 207.8 118.7 207.8 C124.8 207.8 135.0 205.8 138.2 205.4"/><path d="M48.1 217.5 C51.4 219.1 61.5 225.2 67.6 227.3 C73.7 229.3 78.6 229.5 84.7 229.7 C90.7 229.9 98.0 228.9 104.1 228.5 C110.2 228.1 118.3 227.5 121.2 227.3"/><path d="M114.6 171.3 C116.9 171.5 123.7 170.5 128.5 172.5 C133.2 174.5 140.7 181.6 143.1 183.4"/><path d="M101.7 125.0 C101.9 127.4 102.5 133.5 102.9 139.6 C103.3 145.7 103.9 157.9 104.1 161.5"/><path d="M132.1 183.9 C135.4 183.8 146.7 184.0 151.6 182.9 C156.5 181.9 156.9 179.9 161.3 177.3 C165.8 174.8 171.9 170.5 178.4 167.6 C184.9 164.8 193.8 161.9 200.3 160.3 C206.8 158.7 212.5 158.1 217.4 157.9 C222.2 157.7 225.5 159.5 229.5 159.1 C233.6 158.7 238.0 156.3 241.7 155.4 C245.4 154.5 248.3 154.1 251.4 153.7 C254.6 153.4 256.4 153.1 260.7 153.2 C265.0 153.4 274.3 154.5 277.0 154.7"/><path d="M151.6 183.4 C155.3 183.8 167.8 184.9 173.5 185.9 C179.2 186.9 181.2 188.3 185.7 189.5 C190.2 190.7 195.4 192.6 200.3 193.2 C205.2 193.8 210.9 192.0 214.9 193.2 C219.0 194.4 221.8 198.0 224.7 200.5 C227.5 202.9 230.1 205.8 232.0 207.8 C233.8 209.7 235.0 211.4 235.6 212.2"/><path d="M255.1 125.0 C255.2 127.4 254.6 134.9 255.6 139.6 C256.5 144.3 260.4 148.4 260.7 153.2 C261.0 158.1 259.1 163.4 257.5 168.8 C256.0 174.3 253.3 181.1 251.4 185.9 C249.5 190.7 248.1 193.9 246.1 197.6 C244.1 201.2 241.0 205.4 239.3 207.8 C237.5 210.2 237.4 210.1 235.6 212.2 C233.8 214.2 230.5 216.6 228.3 220.0 C226.1 223.3 223.4 226.5 222.2 232.1 C221.0 237.8 221.2 250.4 221.0 254.0"/><path d="M235.6 212.2 C236.6 214.7 239.5 222.7 241.7 227.3 C243.9 231.8 247.4 236.2 249.0 239.4 C250.6 242.7 251.0 245.5 251.4 246.7"/><path d="M235.6 212.2 C237.4 211.6 241.9 209.9 246.6 209.0 C251.2 208.1 258.5 207.2 263.6 206.6 C268.7 206.0 274.8 205.6 277.0 205.4"/><path d="M260.7 153.2 C261.2 155.4 262.1 161.0 263.6 166.4 C265.1 171.8 267.5 180.6 269.7 185.9 C271.9 191.1 275.8 196.0 277.0 198.0"/><path d="M185.7 125.0 C185.4 126.2 184.0 130.1 183.7 132.3 C183.5 134.5 184.4 137.4 184.5 138.4"/><path d="M234.4 125.0 L235.6 132.3"/><path d="M251.4 153.7 C252.3 155.4 255.3 161.4 256.3 164.0 C257.3 166.5 257.3 168.0 257.5 168.8"/><path d="M168.7 220.0 C170.7 220.8 176.8 222.8 180.8 224.8 C184.9 226.9 190.2 232.5 193.0 232.1 C195.8 231.7 196.9 225.2 197.9 222.4 C198.9 219.6 198.9 216.3 199.1 215.1"/><path d="M193.0 232.1 C193.4 234.6 195.2 243.1 195.4 246.7 C195.6 250.4 194.4 252.8 194.2 254.0"/><path d="M260.7 153.2 C262.0 152.2 265.8 148.2 268.5 146.9 C271.2 145.7 275.6 145.9 277.0 145.7"/></g><path d="M-0.6 162.3 L46.9 179.1 L88.3 179.1 L88.3 171.3 L116.3 171.3 L120.0 174.9 L126.0 182.2 L137.0 188.8" fill="none" stroke="#8f8f8f" stroke-width="0.55"/><path d="M135.8 188.8 C136.0 189.1 136.2 189.2 137.0 190.7 C137.8 192.3 139.4 195.0 140.7 198.0 C141.9 201.1 141.9 205.6 144.3 209.0 C146.7 212.5 151.6 217.1 155.3 218.7 C158.9 220.4 163.6 220.6 166.2 218.7 C168.9 216.9 169.3 210.2 171.1 207.8 C172.9 205.4 174.7 204.5 177.2 204.1 C179.6 203.7 182.9 204.5 185.7 205.4 C188.5 206.2 191.8 207.0 194.2 209.0 C196.7 211.0 198.1 214.1 200.3 217.5 C202.5 221.0 205.2 226.0 207.6 229.7 C210.0 233.4 212.9 236.6 214.9 239.4 C216.9 242.3 218.9 244.3 219.8 246.7 C220.7 249.2 220.4 252.8 220.5 254.0" fill="none" stroke="#8f8f8f" stroke-width="0.55"/><path d="M-0.6 105.4 L6.7 105.9 L16.5 107.6 L28.7 108.8 L45.7 112.0 L60.3 114.4 L70.0 108.8 L81.0 103.2 L92.7 107.1 L94.4 111.2 L104.1 112.4 L113.9 111.0 L123.6 112.9 L134.1 114.4 L137.0 114.4 L146.7 112.4 L155.3 110.0 L161.3 111.2 L171.1 108.8 L183.3 109.5 L197.9 108.8 L214.9 108.8 L222.2 105.1 L239.3 103.2 L249.0 105.1 L263.6 105.1 L278.2 105.1" fill="none" stroke="#8ac887" stroke-width="2.4" stroke-linejoin="round" opacity="0.95"/><path d="M30.6 171.6 L32.4 176.3 L37.4 176.6 L33.5 179.8 L34.8 184.6 L30.6 181.9 L26.4 184.6 L27.7 179.8 L23.8 176.6 L28.8 176.3 Z" fill="#f6a335" stroke="#f6a335" stroke-width="0.8" stroke-linejoin="round"/><path d="M2.4 109.3 C-0.8 106.3 -1.2 101.7 2.4 101.7 C6.0 101.7 5.6 106.3 2.4 109.3 Z" fill="#e6433b"/><circle cx="2.4" cy="104.5" r="1.3" fill="#fff"/><text x="165.0" y="23.1" font-size="6.6" fill="#2a2a2a" font-weight="700" paint-order="stroke" stroke="#f7f5ef" stroke-width="0.9" stroke-linejoin="round" textLength="52.3" lengthAdjust="spacingAndGlyphs" dominant-baseline="central">United States</text><text x="30.4" y="35.7" font-size="3.6" fill="#9a9a94" textLength="12.2" lengthAdjust="spacingAndGlyphs" dominant-baseline="central">UTAH</text><text x="118.7" y="43.5" font-size="3.6" fill="#9a9a94" textLength="21.9" lengthAdjust="spacingAndGlyphs" dominant-baseline="central">COLORADO</text><text x="27.4" y="125.6" font-size="3.6" fill="#9a9a94" textLength="17.5" lengthAdjust="spacingAndGlyphs" dominant-baseline="central">ARIZONA</text><text x="228.3" y="47.4" font-size="3.6" fill="#9a9a94" textLength="15.8" lengthAdjust="spacingAndGlyphs" dominant-baseline="central">KANSAS</text><text x="241.7" y="99.8" font-size="3.6" fill="#9a9a94" textLength="22.6" lengthAdjust="spacingAndGlyphs" dominant-baseline="central">OKLAHOMA</text><text x="109.5" y="129.4" font-size="3.6" fill="#9a9a94" textLength="25.6" lengthAdjust="spacingAndGlyphs" dominant-baseline="central">NEW MEXICO</text><text x="49.3" y="197.3" font-size="3.6" fill="#9a9a94" textLength="15.8" lengthAdjust="spacingAndGlyphs" dominant-baseline="central">SONORA</text><text x="113.1" y="211.2" font-size="3.6" fill="#9a9a94" textLength="25.1" lengthAdjust="spacingAndGlyphs" dominant-baseline="central">CHIHUAHUA</text><text x="219.8" y="175.9" font-size="3.6" fill="#9a9a94" textLength="12.7" lengthAdjust="spacingAndGlyphs" dominant-baseline="central">TEXAS</text><text x="176.4" y="235.5" font-size="3.6" fill="#9a9a94" textLength="20.2" lengthAdjust="spacingAndGlyphs" dominant-baseline="central">COAHUILA</text><text x="5.5" y="105.4" font-size="4.4" fill="#3c3c3c" paint-order="stroke" stroke="#f7f5ef" stroke-width="0.9" stroke-linejoin="round" textLength="16.6" lengthAdjust="spacingAndGlyphs" dominant-baseline="central">Kingman</text><text x="130.4" y="19.9" font-size="4.4" fill="#3c3c3c" paint-order="stroke" stroke="#f7f5ef" stroke-width="0.9" stroke-linejoin="round" textLength="10.2" lengthAdjust="spacingAndGlyphs" dominant-baseline="central">Denver</text><text x="23.1" y="145.0" font-size="4.6" fill="#3c3c3c" paint-order="stroke" stroke="#f7f5ef" stroke-width="0.9" stroke-linejoin="round" textLength="14.9" lengthAdjust="spacingAndGlyphs" dominant-baseline="central">Phoenix</text><text x="40.3" y="166.9" font-size="4.6" fill="#3c3c3c" paint-order="stroke" stroke="#f7f5ef" stroke-width="0.9" stroke-linejoin="round" textLength="13.9" lengthAdjust="spacingAndGlyphs" dominant-baseline="central">Tucson</text><text x="116.3" y="171.3" font-size="4.6" fill="#3c3c3c" paint-order="stroke" stroke="#f7f5ef" stroke-width="0.9" stroke-linejoin="round" textLength="14.1" lengthAdjust="spacingAndGlyphs" dominant-baseline="central">El Paso</text><text x="254.6" y="149.8" font-size="4.6" fill="#3c3c3c" paint-order="stroke" stroke="#f7f5ef" stroke-width="0.9" stroke-linejoin="round" textLength="11.4" lengthAdjust="spacingAndGlyphs" dominant-baseline="central">Dallas</text><text x="240.5" y="194.2" font-size="4.6" fill="#3c3c3c" paint-order="stroke" stroke="#f7f5ef" stroke-width="0.9" stroke-linejoin="round" textLength="12.2" lengthAdjust="spacingAndGlyphs" dominant-baseline="central">Austin</text><text x="223.7" y="215.8" font-size="4.6" fill="#3c3c3c" paint-order="stroke" stroke="#f7f5ef" stroke-width="0.9" stroke-linejoin="round" textLength="22.9" lengthAdjust="spacingAndGlyphs" dominant-baseline="central">San Antonio</text><circle cx="30.6" cy="141.6" r="0.7" fill="#fff" stroke="#444" stroke-width="0.4"/><circle cx="46.9" cy="163.2" r="0.7" fill="#fff" stroke="#444" stroke-width="0.4"/><circle cx="114.6" cy="171.3" r="0.7" fill="#fff" stroke="#444" stroke-width="0.4"/><circle cx="260.7" cy="153.2" r="0.7" fill="#fff" stroke="#444" stroke-width="0.4"/><circle cx="246.1" cy="197.6" r="0.7" fill="#fff" stroke="#444" stroke-width="0.4"/><circle cx="235.6" cy="212.2" r="0.7" fill="#fff" stroke="#444" stroke-width="0.4"/><circle cx="136.5" cy="22.8" r="0.7" fill="#fff" stroke="#444" stroke-width="0.4"/><text x="37.9" y="246.3" font-size="3.4" fill="#5b8fc4" font-style="italic" transform="rotate(62 37.9 246.3)" text-anchor="middle">Gulf of Cal</text></g></svg><div style="position:absolute;left:32px;top:28px;width:857px;height:482px;box-sizing:border-box;border:1px solid #1d1d1d;border-bottom-width:1.5px;"></div></div>
</body></html>
